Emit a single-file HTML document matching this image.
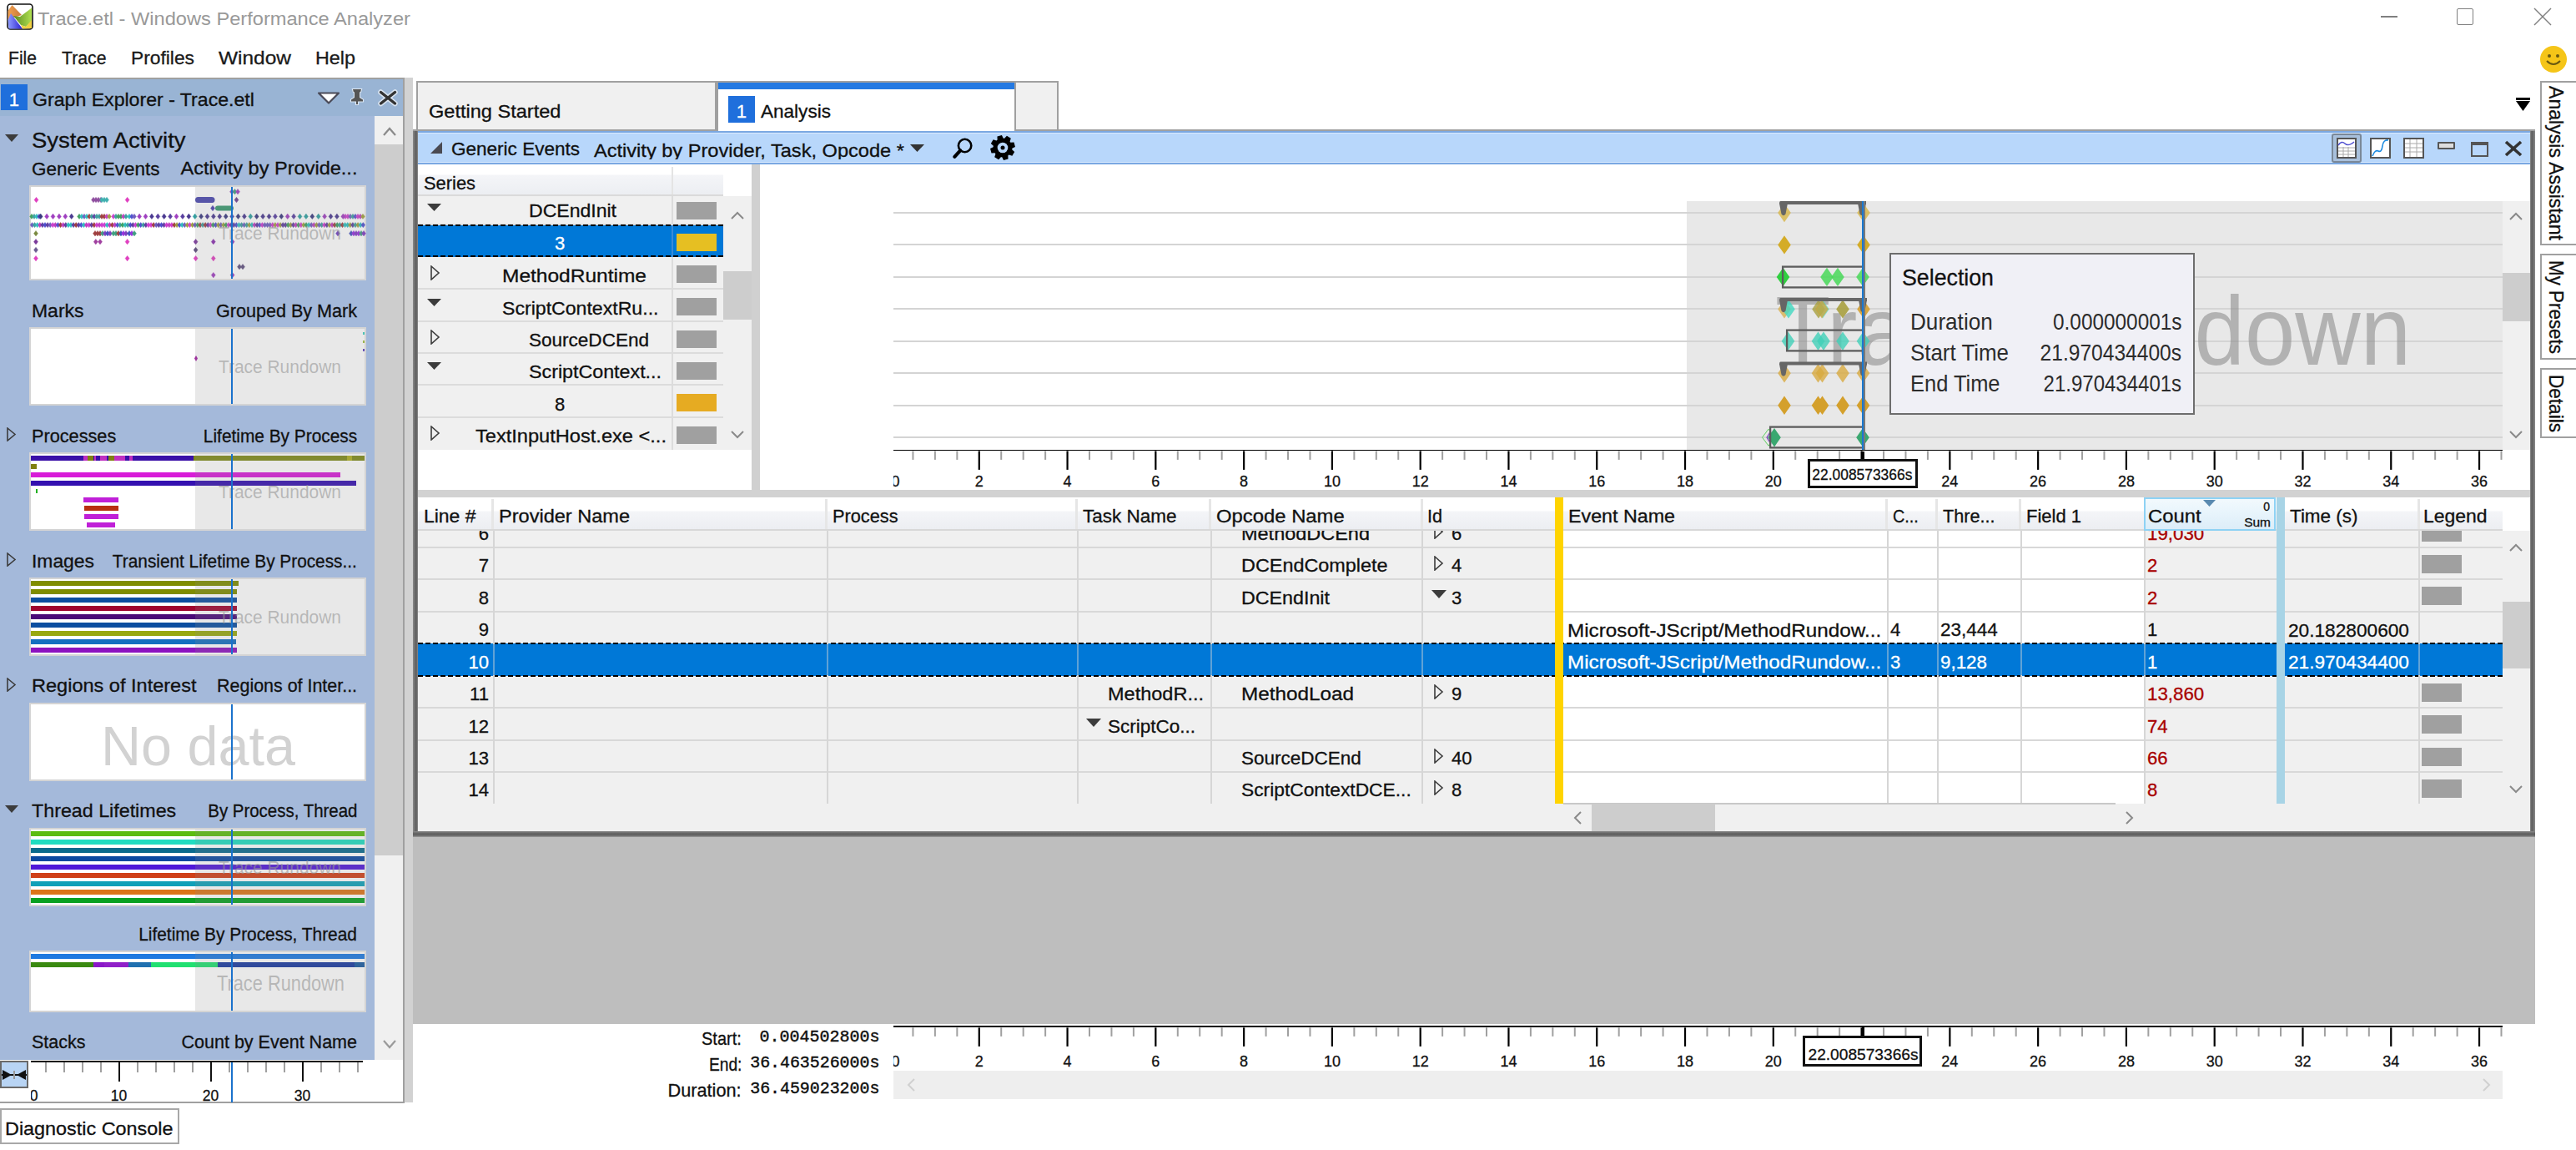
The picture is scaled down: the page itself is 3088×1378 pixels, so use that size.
<!DOCTYPE html><html><head><meta charset="utf-8"><title>WPA</title><style>html,body{margin:0;padding:0;}body{width:3088px;height:1378px;position:relative;overflow:hidden;background:#fff;font-family:"Liberation Sans",sans-serif;}</style></head><body>
<svg style="position:absolute;left:8px;top:4px" width="32" height="32" viewBox="0 0 32 32"><defs><linearGradient id="gb" x1="0" x2="1"><stop offset="0" stop-color="#8e9cff"/><stop offset="1" stop-color="#2a20d0"/></linearGradient><linearGradient id="gg" x1="0" x2="1"><stop offset="0" stop-color="#5a8a20"/><stop offset="1" stop-color="#b0e050"/></linearGradient><linearGradient id="go" x1="0" x2="1"><stop offset="0" stop-color="#f0a050"/><stop offset="1" stop-color="#c87838"/></linearGradient></defs><rect x="1" y="1" width="30" height="30" rx="3.5" fill="#fff" stroke="#111" stroke-width="1.6"/><polygon points="1.5,9 6.5,2 18,14 12,16 1.5,20" fill="url(#go)"/><polygon points="1.5,20 5,12 19,30.5 2.5,30.5" fill="url(#gb)"/><polygon points="8,15 16,16 30,5.5 30,22 23,28 17,26" fill="url(#gg)"/><polygon points="17,26 23,28 30,20 30,30 19,30.5" fill="#f0d040"/></svg>
<div style="position:absolute;left:45px;top:11.42px;font-family:'Liberation Sans', sans-serif;font-size:22.66px;line-height:22.66px;color:#999999;white-space:nowrap;transform:scaleX(1.0429);transform-origin:left center;">Trace.etl - Windows Performance Analyzer</div>
<div style="position:absolute;left:2854px;top:19px;width:20px;height:2px;background:#808080;"></div>
<div style="position:absolute;left:2945px;top:10px;width:20px;height:20px;background:transparent;border:1.5px solid #808080;border-radius:2px;box-sizing:border-box;"></div>
<svg style="position:absolute;left:3037px;top:9px" width="22" height="22"><line x1="1" y1="1" x2="21" y2="21" stroke="#808080" stroke-width="1.5"/><line x1="21" y1="1" x2="1" y2="21" stroke="#808080" stroke-width="1.5"/></svg>
<div style="position:absolute;left:10px;top:58.50px;font-family:'Liberation Sans', sans-serif;font-size:22.56px;line-height:22.56px;color:#1a1a1a;white-space:nowrap;transform:scaleX(0.9353);transform-origin:left center;-webkit-text-stroke:0.3px #1a1a1a;">File</div>
<div style="position:absolute;left:73.5px;top:58.50px;font-family:'Liberation Sans', sans-serif;font-size:22.56px;line-height:22.56px;color:#1a1a1a;white-space:nowrap;transform:scaleX(0.9414);transform-origin:left center;-webkit-text-stroke:0.3px #1a1a1a;">Trace</div>
<div style="position:absolute;left:157px;top:58.50px;font-family:'Liberation Sans', sans-serif;font-size:22.56px;line-height:22.56px;color:#1a1a1a;white-space:nowrap;transform:scaleX(1.0103);transform-origin:left center;-webkit-text-stroke:0.3px #1a1a1a;">Profiles</div>
<div style="position:absolute;left:262px;top:58.50px;font-family:'Liberation Sans', sans-serif;font-size:22.56px;line-height:22.56px;color:#1a1a1a;white-space:nowrap;transform:scaleX(1.0843);transform-origin:left center;-webkit-text-stroke:0.3px #1a1a1a;">Window</div>
<div style="position:absolute;left:378px;top:58.50px;font-family:'Liberation Sans', sans-serif;font-size:22.56px;line-height:22.56px;color:#1a1a1a;white-space:nowrap;transform:scaleX(1.0345);transform-origin:left center;-webkit-text-stroke:0.3px #1a1a1a;">Help</div>
<div style="position:absolute;left:0px;top:93px;width:485px;height:2px;background:#a0a0a0;"></div>
<div style="position:absolute;left:0px;top:95px;width:483px;height:44px;background:#99b4d4;"></div>
<div style="position:absolute;left:483px;top:93px;width:2px;height:1228px;background:#a0a0a0;"></div>
<div style="position:absolute;left:485px;top:93px;width:10px;height:1228px;background:#d2d2d2;"></div>
<div style="position:absolute;left:0px;top:139px;width:449px;height:1131px;background:#a4b9da;"></div>
<div style="position:absolute;left:449px;top:139px;width:34px;height:1131px;background:#f0f0f0;"></div>
<div style="position:absolute;left:449px;top:173px;width:34px;height:852px;background:#cdcdcd;"></div>
<svg style="position:absolute;left:458px;top:150px" width="18" height="14"><polyline points="2,12 9,4 16,12" fill="none" stroke="#8a8a8a" stroke-width="2.2"/></svg>
<svg style="position:absolute;left:458px;top:1245px" width="18" height="14"><polyline points="2,2 9,10 16,2" fill="none" stroke="#9a9a9a" stroke-width="2.2"/></svg>
<div style="position:absolute;left:1px;top:101px;width:32px;height:31px;background:#1f6fdc;"></div>
<div style="position:absolute;left:-483px;width:1000px;text-align:center;top:108.91px;font-family:'Liberation Sans', sans-serif;font-size:22.08px;line-height:22.08px;color:#fff;white-space:nowrap;-webkit-text-stroke:0.3px #fff;">1</div>
<div style="position:absolute;left:39px;top:109.32px;font-family:'Liberation Sans', sans-serif;font-size:22.18px;line-height:22.18px;color:#111;white-space:nowrap;transform:scaleX(1.0424);transform-origin:left center;-webkit-text-stroke:0.3px #111;">Graph Explorer - Trace.etl</div>
<svg style="position:absolute;left:380px;top:108px" width="28" height="18"><polygon points="2,3.5 26,3.5 14,15.5" fill="#fff" stroke="#4a4a58" stroke-width="2.2" stroke-linejoin="round"/></svg>
<svg style="position:absolute;left:416px;top:104px" width="26" height="26" viewBox="0 0 26 26"><path d="M7 3 H17 L16.2 6 L15 6.5 L15 13 L19 15.5 V17.5 H13 V21 H11 V17.5 H5 V15.5 L9 13 L9 6.5 L7.8 6 Z" fill="#555" stroke="#e6eef8" stroke-width="2.2" stroke-opacity="0.85" paint-order="stroke"/></svg>
<svg style="position:absolute;left:451px;top:106px" width="28" height="24"><g stroke="#e4ecf6" stroke-opacity="0.85" stroke-width="6.5" stroke-linecap="round"><line x1="5.5" y1="4.5" x2="22.5" y2="18"/><line x1="22.5" y1="4.5" x2="5.5" y2="18"/></g><g stroke="#333" stroke-width="3.4" stroke-linecap="round"><line x1="5.5" y1="4.5" x2="22.5" y2="18"/><line x1="22.5" y1="4.5" x2="5.5" y2="18"/></g></svg>
<svg style="position:absolute;left:6px;top:161px" width="16" height="9"><polygon points="0,0 16,0 8.0,9" fill="#3c3c3c"/></svg>
<div style="position:absolute;left:37.5px;top:154.50px;font-family:'Liberation Sans', sans-serif;font-size:26.11px;line-height:26.11px;color:#111;white-space:nowrap;transform:scaleX(1.0509);transform-origin:left center;-webkit-text-stroke:0.3px #111;">System Activity</div>
<div style="position:absolute;left:37.5px;top:191.82px;font-family:'Liberation Sans', sans-serif;font-size:21.6px;line-height:21.6px;color:#111;white-space:nowrap;transform:scaleX(1.0395);transform-origin:left center;-webkit-text-stroke:0.3px #111;">Generic Events</div>
<div style="position:absolute;left:-572px;width:1000px;text-align:right;top:191.25px;font-family:'Liberation Sans', sans-serif;font-size:22.27px;line-height:22.27px;color:#111;white-space:nowrap;-webkit-text-stroke:0.3px #111;"><span style="display:inline-block;transform:scaleX(1.0574);transform-origin:right center;">Activity by Provide...</span></div>
<div style="position:absolute;left:35px;top:222px;width:404px;height:114px;background:#d4d4d4;"></div>
<div style="position:absolute;left:37px;top:224px;width:400px;height:110px;background:#ffffff;"></div>
<svg style="position:absolute;left:0px;top:0px;overflow:visible" width="440" height="340"><polygon points="36.1,269.6 38.5,266.5 40.9,269.6 38.5,272.7" fill="#7060c0" stroke="#7060c0" stroke-opacity="0.5" stroke-width="0.8"/><polygon points="39.2,269.6 41.6,266.5 44.0,269.6 41.6,272.7" fill="#40a0a0" stroke="#40a0a0" stroke-opacity="0.5" stroke-width="0.8"/><polygon points="42.3,269.6 44.7,266.5 47.1,269.6 44.7,272.7" fill="#30c0c0" stroke="#30c0c0" stroke-opacity="0.5" stroke-width="0.8"/><polygon points="45.4,269.6 47.8,266.5 50.2,269.6 47.8,272.7" fill="#c040c0" stroke="#c040c0" stroke-opacity="0.5" stroke-width="0.8"/><polygon points="48.5,269.6 50.9,266.5 53.3,269.6 50.9,272.7" fill="#6040a0" stroke="#6040a0" stroke-opacity="0.5" stroke-width="0.8"/><polygon points="51.6,269.6 54.0,266.5 56.4,269.6 54.0,272.7" fill="#5050d0" stroke="#5050d0" stroke-opacity="0.5" stroke-width="0.8"/><polygon points="54.7,269.6 57.1,266.5 59.5,269.6 57.1,272.7" fill="#6040a0" stroke="#6040a0" stroke-opacity="0.5" stroke-width="0.8"/><polygon points="57.8,269.6 60.2,266.5 62.6,269.6 60.2,272.7" fill="#7060c0" stroke="#7060c0" stroke-opacity="0.5" stroke-width="0.8"/><polygon points="60.9,269.6 63.3,266.5 65.7,269.6 63.3,272.7" fill="#d040d0" stroke="#d040d0" stroke-opacity="0.5" stroke-width="0.8"/><polygon points="64.0,269.6 66.4,266.5 68.8,269.6 66.4,272.7" fill="#c040c0" stroke="#c040c0" stroke-opacity="0.5" stroke-width="0.8"/><polygon points="67.1,269.6 69.5,266.5 71.9,269.6 69.5,272.7" fill="#5050d0" stroke="#5050d0" stroke-opacity="0.5" stroke-width="0.8"/><polygon points="70.2,269.6 72.6,266.5 75.0,269.6 72.6,272.7" fill="#a04040" stroke="#a04040" stroke-opacity="0.5" stroke-width="0.8"/><polygon points="73.3,269.6 75.7,266.5 78.1,269.6 75.7,272.7" fill="#c040c0" stroke="#c040c0" stroke-opacity="0.5" stroke-width="0.8"/><polygon points="76.4,269.6 78.8,266.5 81.2,269.6 78.8,272.7" fill="#6040a0" stroke="#6040a0" stroke-opacity="0.5" stroke-width="0.8"/><polygon points="79.5,269.6 81.9,266.5 84.3,269.6 81.9,272.7" fill="#30c0c0" stroke="#30c0c0" stroke-opacity="0.5" stroke-width="0.8"/><polygon points="82.6,269.6 85.0,266.5 87.4,269.6 85.0,272.7" fill="#30c0c0" stroke="#30c0c0" stroke-opacity="0.5" stroke-width="0.8"/><polygon points="85.7,269.6 88.1,266.5 90.5,269.6 88.1,272.7" fill="#6040a0" stroke="#6040a0" stroke-opacity="0.5" stroke-width="0.8"/><polygon points="88.8,269.6 91.2,266.5 93.6,269.6 91.2,272.7" fill="#a04040" stroke="#a04040" stroke-opacity="0.5" stroke-width="0.8"/><polygon points="91.9,269.6 94.3,266.5 96.7,269.6 94.3,272.7" fill="#6040a0" stroke="#6040a0" stroke-opacity="0.5" stroke-width="0.8"/><polygon points="95.0,269.6 97.4,266.5 99.8,269.6 97.4,272.7" fill="#5050d0" stroke="#5050d0" stroke-opacity="0.5" stroke-width="0.8"/><polygon points="98.1,269.6 100.5,266.5 102.9,269.6 100.5,272.7" fill="#30c0c0" stroke="#30c0c0" stroke-opacity="0.5" stroke-width="0.8"/><polygon points="101.2,269.6 103.6,266.5 106.0,269.6 103.6,272.7" fill="#c040c0" stroke="#c040c0" stroke-opacity="0.5" stroke-width="0.8"/><polygon points="104.3,269.6 106.7,266.5 109.1,269.6 106.7,272.7" fill="#d040d0" stroke="#d040d0" stroke-opacity="0.5" stroke-width="0.8"/><polygon points="107.4,269.6 109.8,266.5 112.2,269.6 109.8,272.7" fill="#6040a0" stroke="#6040a0" stroke-opacity="0.5" stroke-width="0.8"/><polygon points="110.5,269.6 112.9,266.5 115.3,269.6 112.9,272.7" fill="#a04040" stroke="#a04040" stroke-opacity="0.5" stroke-width="0.8"/><polygon points="113.6,269.6 116.0,266.5 118.4,269.6 116.0,272.7" fill="#d040d0" stroke="#d040d0" stroke-opacity="0.5" stroke-width="0.8"/><polygon points="116.7,269.6 119.1,266.5 121.5,269.6 119.1,272.7" fill="#c040c0" stroke="#c040c0" stroke-opacity="0.5" stroke-width="0.8"/><polygon points="119.8,269.6 122.2,266.5 124.6,269.6 122.2,272.7" fill="#d040d0" stroke="#d040d0" stroke-opacity="0.5" stroke-width="0.8"/><polygon points="122.9,269.6 125.3,266.5 127.7,269.6 125.3,272.7" fill="#d040d0" stroke="#d040d0" stroke-opacity="0.5" stroke-width="0.8"/><polygon points="126.0,269.6 128.4,266.5 130.8,269.6 128.4,272.7" fill="#30c0c0" stroke="#30c0c0" stroke-opacity="0.5" stroke-width="0.8"/><polygon points="129.1,269.6 131.5,266.5 133.9,269.6 131.5,272.7" fill="#c040c0" stroke="#c040c0" stroke-opacity="0.5" stroke-width="0.8"/><polygon points="132.2,269.6 134.6,266.5 137.0,269.6 134.6,272.7" fill="#a04040" stroke="#a04040" stroke-opacity="0.5" stroke-width="0.8"/><polygon points="135.3,269.6 137.7,266.5 140.1,269.6 137.7,272.7" fill="#c040c0" stroke="#c040c0" stroke-opacity="0.5" stroke-width="0.8"/><polygon points="138.4,269.6 140.8,266.5 143.2,269.6 140.8,272.7" fill="#5050d0" stroke="#5050d0" stroke-opacity="0.5" stroke-width="0.8"/><polygon points="141.5,269.6 143.9,266.5 146.3,269.6 143.9,272.7" fill="#40a0a0" stroke="#40a0a0" stroke-opacity="0.5" stroke-width="0.8"/><polygon points="144.6,269.6 147.0,266.5 149.4,269.6 147.0,272.7" fill="#40a060" stroke="#40a060" stroke-opacity="0.5" stroke-width="0.8"/><polygon points="147.7,269.6 150.1,266.5 152.5,269.6 150.1,272.7" fill="#30c0c0" stroke="#30c0c0" stroke-opacity="0.5" stroke-width="0.8"/><polygon points="150.8,269.6 153.2,266.5 155.6,269.6 153.2,272.7" fill="#40a0a0" stroke="#40a0a0" stroke-opacity="0.5" stroke-width="0.8"/><polygon points="153.9,269.6 156.3,266.5 158.7,269.6 156.3,272.7" fill="#5050d0" stroke="#5050d0" stroke-opacity="0.5" stroke-width="0.8"/><polygon points="157.0,269.6 159.4,266.5 161.8,269.6 159.4,272.7" fill="#6040a0" stroke="#6040a0" stroke-opacity="0.5" stroke-width="0.8"/><polygon points="160.1,269.6 162.5,266.5 164.9,269.6 162.5,272.7" fill="#d040d0" stroke="#d040d0" stroke-opacity="0.5" stroke-width="0.8"/><polygon points="163.2,269.6 165.6,266.5 168.0,269.6 165.6,272.7" fill="#40a060" stroke="#40a060" stroke-opacity="0.5" stroke-width="0.8"/><polygon points="166.3,269.6 168.7,266.5 171.1,269.6 168.7,272.7" fill="#5050d0" stroke="#5050d0" stroke-opacity="0.5" stroke-width="0.8"/><polygon points="169.4,269.6 171.8,266.5 174.2,269.6 171.8,272.7" fill="#40a0a0" stroke="#40a0a0" stroke-opacity="0.5" stroke-width="0.8"/><polygon points="172.5,269.6 174.9,266.5 177.3,269.6 174.9,272.7" fill="#6040a0" stroke="#6040a0" stroke-opacity="0.5" stroke-width="0.8"/><polygon points="175.6,269.6 178.0,266.5 180.4,269.6 178.0,272.7" fill="#d040d0" stroke="#d040d0" stroke-opacity="0.5" stroke-width="0.8"/><polygon points="178.7,269.6 181.1,266.5 183.5,269.6 181.1,272.7" fill="#d040d0" stroke="#d040d0" stroke-opacity="0.5" stroke-width="0.8"/><polygon points="181.8,269.6 184.2,266.5 186.6,269.6 184.2,272.7" fill="#a04040" stroke="#a04040" stroke-opacity="0.5" stroke-width="0.8"/><polygon points="184.9,269.6 187.3,266.5 189.7,269.6 187.3,272.7" fill="#7060c0" stroke="#7060c0" stroke-opacity="0.5" stroke-width="0.8"/><polygon points="188.0,269.6 190.4,266.5 192.8,269.6 190.4,272.7" fill="#6040a0" stroke="#6040a0" stroke-opacity="0.5" stroke-width="0.8"/><polygon points="191.1,269.6 193.5,266.5 195.9,269.6 193.5,272.7" fill="#5050d0" stroke="#5050d0" stroke-opacity="0.5" stroke-width="0.8"/><polygon points="194.2,269.6 196.6,266.5 199.0,269.6 196.6,272.7" fill="#6040a0" stroke="#6040a0" stroke-opacity="0.5" stroke-width="0.8"/><polygon points="197.3,269.6 199.7,266.5 202.1,269.6 199.7,272.7" fill="#d040d0" stroke="#d040d0" stroke-opacity="0.5" stroke-width="0.8"/><polygon points="200.4,269.6 202.8,266.5 205.2,269.6 202.8,272.7" fill="#c040c0" stroke="#c040c0" stroke-opacity="0.5" stroke-width="0.8"/><polygon points="203.5,269.6 205.9,266.5 208.3,269.6 205.9,272.7" fill="#d040d0" stroke="#d040d0" stroke-opacity="0.5" stroke-width="0.8"/><polygon points="206.6,269.6 209.0,266.5 211.4,269.6 209.0,272.7" fill="#a04040" stroke="#a04040" stroke-opacity="0.5" stroke-width="0.8"/><polygon points="209.7,269.6 212.1,266.5 214.5,269.6 212.1,272.7" fill="#a0a040" stroke="#a0a040" stroke-opacity="0.5" stroke-width="0.8"/><polygon points="212.8,269.6 215.2,266.5 217.6,269.6 215.2,272.7" fill="#5050d0" stroke="#5050d0" stroke-opacity="0.5" stroke-width="0.8"/><polygon points="215.9,269.6 218.3,266.5 220.7,269.6 218.3,272.7" fill="#30c0c0" stroke="#30c0c0" stroke-opacity="0.5" stroke-width="0.8"/><polygon points="219.0,269.6 221.4,266.5 223.8,269.6 221.4,272.7" fill="#7060c0" stroke="#7060c0" stroke-opacity="0.5" stroke-width="0.8"/><polygon points="222.1,269.6 224.5,266.5 226.9,269.6 224.5,272.7" fill="#a0a040" stroke="#a0a040" stroke-opacity="0.5" stroke-width="0.8"/><polygon points="225.2,269.6 227.6,266.5 230.0,269.6 227.6,272.7" fill="#d040d0" stroke="#d040d0" stroke-opacity="0.5" stroke-width="0.8"/><polygon points="228.3,269.6 230.7,266.5 233.1,269.6 230.7,272.7" fill="#a0a040" stroke="#a0a040" stroke-opacity="0.5" stroke-width="0.8"/><polygon points="231.4,269.6 233.8,266.5 236.2,269.6 233.8,272.7" fill="#7060c0" stroke="#7060c0" stroke-opacity="0.5" stroke-width="0.8"/><polygon points="234.5,269.6 236.9,266.5 239.3,269.6 236.9,272.7" fill="#40a060" stroke="#40a060" stroke-opacity="0.5" stroke-width="0.8"/><polygon points="237.6,269.6 240.0,266.5 242.4,269.6 240.0,272.7" fill="#a04040" stroke="#a04040" stroke-opacity="0.5" stroke-width="0.8"/><polygon points="240.7,269.6 243.1,266.5 245.5,269.6 243.1,272.7" fill="#40a0a0" stroke="#40a0a0" stroke-opacity="0.5" stroke-width="0.8"/><polygon points="243.8,269.6 246.2,266.5 248.6,269.6 246.2,272.7" fill="#a04040" stroke="#a04040" stroke-opacity="0.5" stroke-width="0.8"/><polygon points="246.9,269.6 249.3,266.5 251.7,269.6 249.3,272.7" fill="#6040a0" stroke="#6040a0" stroke-opacity="0.5" stroke-width="0.8"/><polygon points="250.0,269.6 252.4,266.5 254.8,269.6 252.4,272.7" fill="#d040d0" stroke="#d040d0" stroke-opacity="0.5" stroke-width="0.8"/><polygon points="253.1,269.6 255.5,266.5 257.9,269.6 255.5,272.7" fill="#40a060" stroke="#40a060" stroke-opacity="0.5" stroke-width="0.8"/><polygon points="256.2,269.6 258.6,266.5 261.0,269.6 258.6,272.7" fill="#5050d0" stroke="#5050d0" stroke-opacity="0.5" stroke-width="0.8"/><polygon points="259.3,269.6 261.7,266.5 264.1,269.6 261.7,272.7" fill="#a0a040" stroke="#a0a040" stroke-opacity="0.5" stroke-width="0.8"/><polygon points="262.4,269.6 264.8,266.5 267.2,269.6 264.8,272.7" fill="#7060c0" stroke="#7060c0" stroke-opacity="0.5" stroke-width="0.8"/><polygon points="265.5,269.6 267.9,266.5 270.3,269.6 267.9,272.7" fill="#a0a040" stroke="#a0a040" stroke-opacity="0.5" stroke-width="0.8"/><polygon points="268.6,269.6 271.0,266.5 273.4,269.6 271.0,272.7" fill="#40a060" stroke="#40a060" stroke-opacity="0.5" stroke-width="0.8"/><polygon points="271.7,269.6 274.1,266.5 276.5,269.6 274.1,272.7" fill="#d040d0" stroke="#d040d0" stroke-opacity="0.5" stroke-width="0.8"/><polygon points="274.8,269.6 277.2,266.5 279.6,269.6 277.2,272.7" fill="#6040a0" stroke="#6040a0" stroke-opacity="0.5" stroke-width="0.8"/><polygon points="277.9,269.6 280.3,266.5 282.7,269.6 280.3,272.7" fill="#6040a0" stroke="#6040a0" stroke-opacity="0.5" stroke-width="0.8"/><polygon points="281.0,269.6 283.4,266.5 285.8,269.6 283.4,272.7" fill="#5050d0" stroke="#5050d0" stroke-opacity="0.5" stroke-width="0.8"/><polygon points="284.1,269.6 286.5,266.5 288.9,269.6 286.5,272.7" fill="#30c0c0" stroke="#30c0c0" stroke-opacity="0.5" stroke-width="0.8"/><polygon points="287.2,269.6 289.6,266.5 292.0,269.6 289.6,272.7" fill="#40a0a0" stroke="#40a0a0" stroke-opacity="0.5" stroke-width="0.8"/><polygon points="290.3,269.6 292.7,266.5 295.1,269.6 292.7,272.7" fill="#7060c0" stroke="#7060c0" stroke-opacity="0.5" stroke-width="0.8"/><polygon points="293.4,269.6 295.8,266.5 298.2,269.6 295.8,272.7" fill="#40a0a0" stroke="#40a0a0" stroke-opacity="0.5" stroke-width="0.8"/><polygon points="296.5,269.6 298.9,266.5 301.3,269.6 298.9,272.7" fill="#a0a040" stroke="#a0a040" stroke-opacity="0.5" stroke-width="0.8"/><polygon points="299.6,269.6 302.0,266.5 304.4,269.6 302.0,272.7" fill="#30c0c0" stroke="#30c0c0" stroke-opacity="0.5" stroke-width="0.8"/><polygon points="302.7,269.6 305.1,266.5 307.5,269.6 305.1,272.7" fill="#c040c0" stroke="#c040c0" stroke-opacity="0.5" stroke-width="0.8"/><polygon points="305.8,269.6 308.2,266.5 310.6,269.6 308.2,272.7" fill="#6040a0" stroke="#6040a0" stroke-opacity="0.5" stroke-width="0.8"/><polygon points="308.9,269.6 311.3,266.5 313.7,269.6 311.3,272.7" fill="#5050d0" stroke="#5050d0" stroke-opacity="0.5" stroke-width="0.8"/><polygon points="312.0,269.6 314.4,266.5 316.8,269.6 314.4,272.7" fill="#d040d0" stroke="#d040d0" stroke-opacity="0.5" stroke-width="0.8"/><polygon points="315.1,269.6 317.5,266.5 319.9,269.6 317.5,272.7" fill="#7060c0" stroke="#7060c0" stroke-opacity="0.5" stroke-width="0.8"/><polygon points="318.2,269.6 320.6,266.5 323.0,269.6 320.6,272.7" fill="#7060c0" stroke="#7060c0" stroke-opacity="0.5" stroke-width="0.8"/><polygon points="321.3,269.6 323.7,266.5 326.1,269.6 323.7,272.7" fill="#7060c0" stroke="#7060c0" stroke-opacity="0.5" stroke-width="0.8"/><polygon points="324.4,269.6 326.8,266.5 329.2,269.6 326.8,272.7" fill="#d040d0" stroke="#d040d0" stroke-opacity="0.5" stroke-width="0.8"/><polygon points="327.5,269.6 329.9,266.5 332.3,269.6 329.9,272.7" fill="#a0a040" stroke="#a0a040" stroke-opacity="0.5" stroke-width="0.8"/><polygon points="330.6,269.6 333.0,266.5 335.4,269.6 333.0,272.7" fill="#d040d0" stroke="#d040d0" stroke-opacity="0.5" stroke-width="0.8"/><polygon points="333.7,269.6 336.1,266.5 338.5,269.6 336.1,272.7" fill="#a0a040" stroke="#a0a040" stroke-opacity="0.5" stroke-width="0.8"/><polygon points="336.8,269.6 339.2,266.5 341.6,269.6 339.2,272.7" fill="#6040a0" stroke="#6040a0" stroke-opacity="0.5" stroke-width="0.8"/><polygon points="339.9,269.6 342.3,266.5 344.7,269.6 342.3,272.7" fill="#6040a0" stroke="#6040a0" stroke-opacity="0.5" stroke-width="0.8"/><polygon points="343.0,269.6 345.4,266.5 347.8,269.6 345.4,272.7" fill="#40a060" stroke="#40a060" stroke-opacity="0.5" stroke-width="0.8"/><polygon points="346.1,269.6 348.5,266.5 350.9,269.6 348.5,272.7" fill="#a0a040" stroke="#a0a040" stroke-opacity="0.5" stroke-width="0.8"/><polygon points="349.2,269.6 351.6,266.5 354.0,269.6 351.6,272.7" fill="#6040a0" stroke="#6040a0" stroke-opacity="0.5" stroke-width="0.8"/><polygon points="352.3,269.6 354.7,266.5 357.1,269.6 354.7,272.7" fill="#c040c0" stroke="#c040c0" stroke-opacity="0.5" stroke-width="0.8"/><polygon points="355.4,269.6 357.8,266.5 360.2,269.6 357.8,272.7" fill="#40a060" stroke="#40a060" stroke-opacity="0.5" stroke-width="0.8"/><polygon points="358.5,269.6 360.9,266.5 363.3,269.6 360.9,272.7" fill="#d040d0" stroke="#d040d0" stroke-opacity="0.5" stroke-width="0.8"/><polygon points="361.6,269.6 364.0,266.5 366.4,269.6 364.0,272.7" fill="#a0a040" stroke="#a0a040" stroke-opacity="0.5" stroke-width="0.8"/><polygon points="364.7,269.6 367.1,266.5 369.5,269.6 367.1,272.7" fill="#40a060" stroke="#40a060" stroke-opacity="0.5" stroke-width="0.8"/><polygon points="367.8,269.6 370.2,266.5 372.6,269.6 370.2,272.7" fill="#30c0c0" stroke="#30c0c0" stroke-opacity="0.5" stroke-width="0.8"/><polygon points="370.9,269.6 373.3,266.5 375.7,269.6 373.3,272.7" fill="#7060c0" stroke="#7060c0" stroke-opacity="0.5" stroke-width="0.8"/><polygon points="374.0,269.6 376.4,266.5 378.8,269.6 376.4,272.7" fill="#c040c0" stroke="#c040c0" stroke-opacity="0.5" stroke-width="0.8"/><polygon points="377.1,269.6 379.5,266.5 381.9,269.6 379.5,272.7" fill="#a0a040" stroke="#a0a040" stroke-opacity="0.5" stroke-width="0.8"/><polygon points="380.2,269.6 382.6,266.5 385.0,269.6 382.6,272.7" fill="#7060c0" stroke="#7060c0" stroke-opacity="0.5" stroke-width="0.8"/><polygon points="383.3,269.6 385.7,266.5 388.1,269.6 385.7,272.7" fill="#40a0a0" stroke="#40a0a0" stroke-opacity="0.5" stroke-width="0.8"/><polygon points="386.4,269.6 388.8,266.5 391.2,269.6 388.8,272.7" fill="#d040d0" stroke="#d040d0" stroke-opacity="0.5" stroke-width="0.8"/><polygon points="389.5,269.6 391.9,266.5 394.3,269.6 391.9,272.7" fill="#6040a0" stroke="#6040a0" stroke-opacity="0.5" stroke-width="0.8"/><polygon points="392.6,269.6 395.0,266.5 397.4,269.6 395.0,272.7" fill="#a0a040" stroke="#a0a040" stroke-opacity="0.5" stroke-width="0.8"/><polygon points="395.7,269.6 398.1,266.5 400.5,269.6 398.1,272.7" fill="#c040c0" stroke="#c040c0" stroke-opacity="0.5" stroke-width="0.8"/><polygon points="398.8,269.6 401.2,266.5 403.6,269.6 401.2,272.7" fill="#a04040" stroke="#a04040" stroke-opacity="0.5" stroke-width="0.8"/><polygon points="401.9,269.6 404.3,266.5 406.7,269.6 404.3,272.7" fill="#40a060" stroke="#40a060" stroke-opacity="0.5" stroke-width="0.8"/><polygon points="405.0,269.6 407.4,266.5 409.8,269.6 407.4,272.7" fill="#40a0a0" stroke="#40a0a0" stroke-opacity="0.5" stroke-width="0.8"/><polygon points="408.1,269.6 410.5,266.5 412.9,269.6 410.5,272.7" fill="#a04040" stroke="#a04040" stroke-opacity="0.5" stroke-width="0.8"/><polygon points="411.2,269.6 413.6,266.5 416.0,269.6 413.6,272.7" fill="#30c0c0" stroke="#30c0c0" stroke-opacity="0.5" stroke-width="0.8"/><polygon points="414.3,269.6 416.7,266.5 419.1,269.6 416.7,272.7" fill="#30c0c0" stroke="#30c0c0" stroke-opacity="0.5" stroke-width="0.8"/><polygon points="417.4,269.6 419.8,266.5 422.2,269.6 419.8,272.7" fill="#a0a040" stroke="#a0a040" stroke-opacity="0.5" stroke-width="0.8"/><polygon points="420.5,269.6 422.9,266.5 425.3,269.6 422.9,272.7" fill="#6040a0" stroke="#6040a0" stroke-opacity="0.5" stroke-width="0.8"/><polygon points="423.6,269.6 426.0,266.5 428.4,269.6 426.0,272.7" fill="#40a0a0" stroke="#40a0a0" stroke-opacity="0.5" stroke-width="0.8"/><polygon points="426.7,269.6 429.1,266.5 431.5,269.6 429.1,272.7" fill="#a0a040" stroke="#a0a040" stroke-opacity="0.5" stroke-width="0.8"/><polygon points="429.8,269.6 432.2,266.5 434.6,269.6 432.2,272.7" fill="#30c0c0" stroke="#30c0c0" stroke-opacity="0.5" stroke-width="0.8"/><polygon points="432.9,269.6 435.3,266.5 437.7,269.6 435.3,272.7" fill="#5050d0" stroke="#5050d0" stroke-opacity="0.5" stroke-width="0.8"/><polygon points="35.6,259.4 38.0,256.3 40.4,259.4 38.0,262.5" fill="#40a060" stroke="#40a060" stroke-opacity="0.5" stroke-width="0.8"/><polygon points="38.6,259.4 41.0,256.3 43.4,259.4 41.0,262.5" fill="#40a0a0" stroke="#40a0a0" stroke-opacity="0.5" stroke-width="0.8"/><polygon points="41.6,259.4 44.0,256.3 46.4,259.4 44.0,262.5" fill="#30c0c0" stroke="#30c0c0" stroke-opacity="0.5" stroke-width="0.8"/><polygon points="44.6,259.4 47.0,256.3 49.4,259.4 47.0,262.5" fill="#5050d0" stroke="#5050d0" stroke-opacity="0.5" stroke-width="0.8"/><polygon points="92.6,259.4 95.0,256.3 97.4,259.4 95.0,262.5" fill="#40a060" stroke="#40a060" stroke-opacity="0.5" stroke-width="0.8"/><polygon points="95.6,259.4 98.0,256.3 100.4,259.4 98.0,262.5" fill="#30c0c0" stroke="#30c0c0" stroke-opacity="0.5" stroke-width="0.8"/><polygon points="98.6,259.4 101.0,256.3 103.4,259.4 101.0,262.5" fill="#7060c0" stroke="#7060c0" stroke-opacity="0.5" stroke-width="0.8"/><polygon points="101.6,259.4 104.0,256.3 106.4,259.4 104.0,262.5" fill="#30c0c0" stroke="#30c0c0" stroke-opacity="0.5" stroke-width="0.8"/><polygon points="104.6,259.4 107.0,256.3 109.4,259.4 107.0,262.5" fill="#a04040" stroke="#a04040" stroke-opacity="0.5" stroke-width="0.8"/><polygon points="107.6,259.4 110.0,256.3 112.4,259.4 110.0,262.5" fill="#40a0a0" stroke="#40a0a0" stroke-opacity="0.5" stroke-width="0.8"/><polygon points="110.6,259.4 113.0,256.3 115.4,259.4 113.0,262.5" fill="#6040a0" stroke="#6040a0" stroke-opacity="0.5" stroke-width="0.8"/><polygon points="113.6,259.4 116.0,256.3 118.4,259.4 116.0,262.5" fill="#40a0a0" stroke="#40a0a0" stroke-opacity="0.5" stroke-width="0.8"/><polygon points="116.6,259.4 119.0,256.3 121.4,259.4 119.0,262.5" fill="#40a0a0" stroke="#40a0a0" stroke-opacity="0.5" stroke-width="0.8"/><polygon points="119.6,259.4 122.0,256.3 124.4,259.4 122.0,262.5" fill="#a04040" stroke="#a04040" stroke-opacity="0.5" stroke-width="0.8"/><polygon points="122.6,259.4 125.0,256.3 127.4,259.4 125.0,262.5" fill="#a04040" stroke="#a04040" stroke-opacity="0.5" stroke-width="0.8"/><polygon points="125.6,259.4 128.0,256.3 130.4,259.4 128.0,262.5" fill="#c040c0" stroke="#c040c0" stroke-opacity="0.5" stroke-width="0.8"/><polygon points="128.6,259.4 131.0,256.3 133.4,259.4 131.0,262.5" fill="#a0a040" stroke="#a0a040" stroke-opacity="0.5" stroke-width="0.8"/><polygon points="133.6,259.4 136.0,256.3 138.4,259.4 136.0,262.5" fill="#d040d0" stroke="#d040d0" stroke-opacity="0.5" stroke-width="0.8"/><polygon points="136.6,259.4 139.0,256.3 141.4,259.4 139.0,262.5" fill="#40a0a0" stroke="#40a0a0" stroke-opacity="0.5" stroke-width="0.8"/><polygon points="139.6,259.4 142.0,256.3 144.4,259.4 142.0,262.5" fill="#40a060" stroke="#40a060" stroke-opacity="0.5" stroke-width="0.8"/><polygon points="142.6,259.4 145.0,256.3 147.4,259.4 145.0,262.5" fill="#40a060" stroke="#40a060" stroke-opacity="0.5" stroke-width="0.8"/><polygon points="145.6,259.4 148.0,256.3 150.4,259.4 148.0,262.5" fill="#c040c0" stroke="#c040c0" stroke-opacity="0.5" stroke-width="0.8"/><polygon points="148.6,259.4 151.0,256.3 153.4,259.4 151.0,262.5" fill="#40a0a0" stroke="#40a0a0" stroke-opacity="0.5" stroke-width="0.8"/><polygon points="152.6,259.4 155.0,256.3 157.4,259.4 155.0,262.5" fill="#30c0c0" stroke="#30c0c0" stroke-opacity="0.5" stroke-width="0.8"/><polygon points="155.6,259.4 158.0,256.3 160.4,259.4 158.0,262.5" fill="#5050d0" stroke="#5050d0" stroke-opacity="0.5" stroke-width="0.8"/><polygon points="158.6,259.4 161.0,256.3 163.4,259.4 161.0,262.5" fill="#7060c0" stroke="#7060c0" stroke-opacity="0.5" stroke-width="0.8"/><polygon points="411.6,259.4 414.0,256.3 416.4,259.4 414.0,262.5" fill="#d040d0" stroke="#d040d0" stroke-opacity="0.5" stroke-width="0.8"/><polygon points="414.6,259.4 417.0,256.3 419.4,259.4 417.0,262.5" fill="#d040d0" stroke="#d040d0" stroke-opacity="0.5" stroke-width="0.8"/><polygon points="417.6,259.4 420.0,256.3 422.4,259.4 420.0,262.5" fill="#7060c0" stroke="#7060c0" stroke-opacity="0.5" stroke-width="0.8"/><polygon points="420.6,259.4 423.0,256.3 425.4,259.4 423.0,262.5" fill="#40a0a0" stroke="#40a0a0" stroke-opacity="0.5" stroke-width="0.8"/><polygon points="423.6,259.4 426.0,256.3 428.4,259.4 426.0,262.5" fill="#5050d0" stroke="#5050d0" stroke-opacity="0.5" stroke-width="0.8"/><polygon points="426.6,259.4 429.0,256.3 431.4,259.4 429.0,262.5" fill="#d040d0" stroke="#d040d0" stroke-opacity="0.5" stroke-width="0.8"/><polygon points="429.6,259.4 432.0,256.3 434.4,259.4 432.0,262.5" fill="#c040c0" stroke="#c040c0" stroke-opacity="0.5" stroke-width="0.8"/><polygon points="432.6,259.4 435.0,256.3 437.4,259.4 435.0,262.5" fill="#a0a040" stroke="#a0a040" stroke-opacity="0.5" stroke-width="0.8"/><polygon points="46.2,259.4 48.7,256.1 51.2,259.4 48.7,262.6" fill="#3a3a80" stroke="#3a3a80" stroke-opacity="0.5" stroke-width="0.8"/><polygon points="53.6,259.4 56.1,256.1 58.6,259.4 56.1,262.6" fill="#a040c0" stroke="#a040c0" stroke-opacity="0.5" stroke-width="0.8"/><polygon points="61.0,259.4 63.5,256.1 66.0,259.4 63.5,262.6" fill="#a040c0" stroke="#a040c0" stroke-opacity="0.5" stroke-width="0.8"/><polygon points="68.4,259.4 70.9,256.1 73.4,259.4 70.9,262.6" fill="#a040c0" stroke="#a040c0" stroke-opacity="0.5" stroke-width="0.8"/><polygon points="75.8,259.4 78.3,256.1 80.8,259.4 78.3,262.6" fill="#a040c0" stroke="#a040c0" stroke-opacity="0.5" stroke-width="0.8"/><polygon points="83.2,259.4 85.7,256.1 88.2,259.4 85.7,262.6" fill="#4a3a90" stroke="#4a3a90" stroke-opacity="0.5" stroke-width="0.8"/><polygon points="164.6,259.4 167.1,256.1 169.6,259.4 167.1,262.6" fill="#a040c0" stroke="#a040c0" stroke-opacity="0.5" stroke-width="0.8"/><polygon points="172.0,259.4 174.5,256.1 177.0,259.4 174.5,262.6" fill="#a040c0" stroke="#a040c0" stroke-opacity="0.5" stroke-width="0.8"/><polygon points="179.4,259.4 181.9,256.1 184.4,259.4 181.9,262.6" fill="#4a3a90" stroke="#4a3a90" stroke-opacity="0.5" stroke-width="0.8"/><polygon points="186.8,259.4 189.3,256.1 191.8,259.4 189.3,262.6" fill="#5a40a0" stroke="#5a40a0" stroke-opacity="0.5" stroke-width="0.8"/><polygon points="194.2,259.4 196.7,256.1 199.2,259.4 196.7,262.6" fill="#4a3a90" stroke="#4a3a90" stroke-opacity="0.5" stroke-width="0.8"/><polygon points="201.6,259.4 204.1,256.1 206.6,259.4 204.1,262.6" fill="#5a40a0" stroke="#5a40a0" stroke-opacity="0.5" stroke-width="0.8"/><polygon points="209.0,259.4 211.5,256.1 214.0,259.4 211.5,262.6" fill="#a040c0" stroke="#a040c0" stroke-opacity="0.5" stroke-width="0.8"/><polygon points="216.4,259.4 218.9,256.1 221.4,259.4 218.9,262.6" fill="#5a40a0" stroke="#5a40a0" stroke-opacity="0.5" stroke-width="0.8"/><polygon points="223.8,259.4 226.3,256.1 228.8,259.4 226.3,262.6" fill="#4a3a90" stroke="#4a3a90" stroke-opacity="0.5" stroke-width="0.8"/><polygon points="231.2,259.4 233.7,256.1 236.2,259.4 233.7,262.6" fill="#30a0a0" stroke="#30a0a0" stroke-opacity="0.5" stroke-width="0.8"/><polygon points="238.6,259.4 241.1,256.1 243.6,259.4 241.1,262.6" fill="#3a3a80" stroke="#3a3a80" stroke-opacity="0.5" stroke-width="0.8"/><polygon points="246.0,259.4 248.5,256.1 251.0,259.4 248.5,262.6" fill="#4a3a90" stroke="#4a3a90" stroke-opacity="0.5" stroke-width="0.8"/><polygon points="253.4,259.4 255.9,256.1 258.4,259.4 255.9,262.6" fill="#4a3a90" stroke="#4a3a90" stroke-opacity="0.5" stroke-width="0.8"/><polygon points="260.8,259.4 263.3,256.1 265.8,259.4 263.3,262.6" fill="#4a3a90" stroke="#4a3a90" stroke-opacity="0.5" stroke-width="0.8"/><polygon points="268.2,259.4 270.7,256.1 273.2,259.4 270.7,262.6" fill="#3a3a80" stroke="#3a3a80" stroke-opacity="0.5" stroke-width="0.8"/><polygon points="275.6,259.4 278.1,256.1 280.6,259.4 278.1,262.6" fill="#5a40a0" stroke="#5a40a0" stroke-opacity="0.5" stroke-width="0.8"/><polygon points="283.0,259.4 285.5,256.1 288.0,259.4 285.5,262.6" fill="#3a3a80" stroke="#3a3a80" stroke-opacity="0.5" stroke-width="0.8"/><polygon points="290.4,259.4 292.9,256.1 295.4,259.4 292.9,262.6" fill="#4a3a90" stroke="#4a3a90" stroke-opacity="0.5" stroke-width="0.8"/><polygon points="297.8,259.4 300.3,256.1 302.8,259.4 300.3,262.6" fill="#30a0a0" stroke="#30a0a0" stroke-opacity="0.5" stroke-width="0.8"/><polygon points="305.2,259.4 307.7,256.1 310.2,259.4 307.7,262.6" fill="#3a3a80" stroke="#3a3a80" stroke-opacity="0.5" stroke-width="0.8"/><polygon points="312.6,259.4 315.1,256.1 317.6,259.4 315.1,262.6" fill="#4a3a90" stroke="#4a3a90" stroke-opacity="0.5" stroke-width="0.8"/><polygon points="320.0,259.4 322.5,256.1 325.0,259.4 322.5,262.6" fill="#4a3a90" stroke="#4a3a90" stroke-opacity="0.5" stroke-width="0.8"/><polygon points="327.4,259.4 329.9,256.1 332.4,259.4 329.9,262.6" fill="#5a40a0" stroke="#5a40a0" stroke-opacity="0.5" stroke-width="0.8"/><polygon points="334.8,259.4 337.3,256.1 339.8,259.4 337.3,262.6" fill="#3a3a80" stroke="#3a3a80" stroke-opacity="0.5" stroke-width="0.8"/><polygon points="342.2,259.4 344.7,256.1 347.2,259.4 344.7,262.6" fill="#a040c0" stroke="#a040c0" stroke-opacity="0.5" stroke-width="0.8"/><polygon points="349.6,259.4 352.1,256.1 354.6,259.4 352.1,262.6" fill="#5a40a0" stroke="#5a40a0" stroke-opacity="0.5" stroke-width="0.8"/><polygon points="357.0,259.4 359.5,256.1 362.0,259.4 359.5,262.6" fill="#30a0a0" stroke="#30a0a0" stroke-opacity="0.5" stroke-width="0.8"/><polygon points="364.4,259.4 366.9,256.1 369.4,259.4 366.9,262.6" fill="#30a0a0" stroke="#30a0a0" stroke-opacity="0.5" stroke-width="0.8"/><polygon points="371.8,259.4 374.3,256.1 376.8,259.4 374.3,262.6" fill="#3a3a80" stroke="#3a3a80" stroke-opacity="0.5" stroke-width="0.8"/><polygon points="379.2,259.4 381.7,256.1 384.2,259.4 381.7,262.6" fill="#30a0a0" stroke="#30a0a0" stroke-opacity="0.5" stroke-width="0.8"/><polygon points="386.6,259.4 389.1,256.1 391.6,259.4 389.1,262.6" fill="#a040c0" stroke="#a040c0" stroke-opacity="0.5" stroke-width="0.8"/><polygon points="394.0,259.4 396.5,256.1 399.0,259.4 396.5,262.6" fill="#4a3a90" stroke="#4a3a90" stroke-opacity="0.5" stroke-width="0.8"/><polygon points="401.4,259.4 403.9,256.1 406.4,259.4 403.9,262.6" fill="#4a3a90" stroke="#4a3a90" stroke-opacity="0.5" stroke-width="0.8"/><polygon points="408.8,259.4 411.3,256.1 413.8,259.4 411.3,262.6" fill="#a040c0" stroke="#a040c0" stroke-opacity="0.5" stroke-width="0.8"/><polygon points="40.5,279.7 43.0,276.4 45.5,279.7 43.0,282.9" fill="#7a8a40" stroke="#7a8a40" stroke-opacity="0.5" stroke-width="0.8"/><polygon points="111.5,279.7 114.0,276.4 116.5,279.7 114.0,282.9" fill="#a04040" stroke="#a04040" stroke-opacity="0.5" stroke-width="0.8"/><polygon points="114.5,279.7 117.0,276.4 119.5,279.7 117.0,282.9" fill="#a04040" stroke="#a04040" stroke-opacity="0.5" stroke-width="0.8"/><polygon points="117.5,279.7 120.0,276.4 122.5,279.7 120.0,282.9" fill="#a04040" stroke="#a04040" stroke-opacity="0.5" stroke-width="0.8"/><polygon points="120.5,279.7 123.0,276.4 125.5,279.7 123.0,282.9" fill="#40a080" stroke="#40a080" stroke-opacity="0.5" stroke-width="0.8"/><polygon points="123.5,279.7 126.0,276.4 128.5,279.7 126.0,282.9" fill="#8040c0" stroke="#8040c0" stroke-opacity="0.5" stroke-width="0.8"/><polygon points="126.5,279.7 129.0,276.4 131.5,279.7 129.0,282.9" fill="#4050c0" stroke="#4050c0" stroke-opacity="0.5" stroke-width="0.8"/><polygon points="129.5,279.7 132.0,276.4 134.5,279.7 132.0,282.9" fill="#8040c0" stroke="#8040c0" stroke-opacity="0.5" stroke-width="0.8"/><polygon points="133.5,279.7 136.0,276.4 138.5,279.7 136.0,282.9" fill="#40a080" stroke="#40a080" stroke-opacity="0.5" stroke-width="0.8"/><polygon points="136.5,279.7 139.0,276.4 141.5,279.7 139.0,282.9" fill="#40a080" stroke="#40a080" stroke-opacity="0.5" stroke-width="0.8"/><polygon points="139.5,279.7 142.0,276.4 144.5,279.7 142.0,282.9" fill="#a04040" stroke="#a04040" stroke-opacity="0.5" stroke-width="0.8"/><polygon points="142.5,279.7 145.0,276.4 147.5,279.7 145.0,282.9" fill="#4050c0" stroke="#4050c0" stroke-opacity="0.5" stroke-width="0.8"/><polygon points="145.5,279.7 148.0,276.4 150.5,279.7 148.0,282.9" fill="#9a30e0" stroke="#9a30e0" stroke-opacity="0.5" stroke-width="0.8"/><polygon points="148.5,279.7 151.0,276.4 153.5,279.7 151.0,282.9" fill="#8040c0" stroke="#8040c0" stroke-opacity="0.5" stroke-width="0.8"/><polygon points="152.5,279.7 155.0,276.4 157.5,279.7 155.0,282.9" fill="#4050c0" stroke="#4050c0" stroke-opacity="0.5" stroke-width="0.8"/><polygon points="155.5,279.7 158.0,276.4 160.5,279.7 158.0,282.9" fill="#9a30e0" stroke="#9a30e0" stroke-opacity="0.5" stroke-width="0.8"/><polygon points="158.5,279.7 161.0,276.4 163.5,279.7 161.0,282.9" fill="#40a080" stroke="#40a080" stroke-opacity="0.5" stroke-width="0.8"/><polygon points="418.5,279.7 421.0,276.4 423.5,279.7 421.0,282.9" fill="#4050c0" stroke="#4050c0" stroke-opacity="0.5" stroke-width="0.8"/><polygon points="421.5,279.7 424.0,276.4 426.5,279.7 424.0,282.9" fill="#9a30e0" stroke="#9a30e0" stroke-opacity="0.5" stroke-width="0.8"/><polygon points="424.5,279.7 427.0,276.4 429.5,279.7 427.0,282.9" fill="#8040c0" stroke="#8040c0" stroke-opacity="0.5" stroke-width="0.8"/><polygon points="427.5,279.7 430.0,276.4 432.5,279.7 430.0,282.9" fill="#9a30e0" stroke="#9a30e0" stroke-opacity="0.5" stroke-width="0.8"/><polygon points="430.5,279.7 433.0,276.4 435.5,279.7 433.0,282.9" fill="#40a080" stroke="#40a080" stroke-opacity="0.5" stroke-width="0.8"/><polygon points="433.5,279.7 436.0,276.4 438.5,279.7 436.0,282.9" fill="#8040c0" stroke="#8040c0" stroke-opacity="0.5" stroke-width="0.8"/><polygon points="402.5,279.7 405.0,276.4 407.5,279.7 405.0,282.9" fill="#7040c0" stroke="#7040c0" stroke-opacity="0.5" stroke-width="0.8"/><polygon points="40.5,289.7 43.0,286.4 45.5,289.7 43.0,292.9" fill="#7a3a9a" stroke="#7a3a9a" stroke-opacity="0.5" stroke-width="0.8"/><polygon points="112.3,289.7 114.8,286.4 117.3,289.7 114.8,292.9" fill="#a040a0" stroke="#a040a0" stroke-opacity="0.5" stroke-width="0.8"/><polygon points="117.5,289.7 120.0,286.4 122.5,289.7 120.0,292.9" fill="#a040a0" stroke="#a040a0" stroke-opacity="0.5" stroke-width="0.8"/><polygon points="150.1,289.7 152.6,286.4 155.1,289.7 152.6,292.9" fill="#e040c0" stroke="#e040c0" stroke-opacity="0.5" stroke-width="0.8"/><polygon points="232.1,289.7 234.6,286.4 237.1,289.7 234.6,292.9" fill="#7a3a9a" stroke="#7a3a9a" stroke-opacity="0.5" stroke-width="0.8"/><polygon points="253.3,289.7 255.8,286.4 258.3,289.7 255.8,292.9" fill="#8a30b0" stroke="#8a30b0" stroke-opacity="0.5" stroke-width="0.8"/><polygon points="276.1,289.7 278.6,286.4 281.1,289.7 278.6,292.9" fill="#9040c0" stroke="#9040c0" stroke-opacity="0.5" stroke-width="0.8"/><polygon points="40.5,299.5 43.0,296.2 45.5,299.5 43.0,302.8" fill="#6a5a90" stroke="#6a5a90" stroke-opacity="0.5" stroke-width="0.8"/><polygon points="232.1,299.5 234.6,296.2 237.1,299.5 234.6,302.8" fill="#5a4a7a" stroke="#5a4a7a" stroke-opacity="0.5" stroke-width="0.8"/><polygon points="40.5,309.6 43.0,306.4 45.5,309.6 43.0,312.9" fill="#e040c0" stroke="#e040c0" stroke-opacity="0.5" stroke-width="0.8"/><polygon points="150.1,309.6 152.6,306.4 155.1,309.6 152.6,312.9" fill="#e040c0" stroke="#e040c0" stroke-opacity="0.5" stroke-width="0.8"/><polygon points="232.1,309.6 234.6,306.4 237.1,309.6 234.6,312.9" fill="#e040c0" stroke="#e040c0" stroke-opacity="0.5" stroke-width="0.8"/><polygon points="253.3,309.6 255.8,306.4 258.3,309.6 255.8,312.9" fill="#e040c0" stroke="#e040c0" stroke-opacity="0.5" stroke-width="0.8"/><polygon points="284.5,319.7 287.0,316.4 289.5,319.7 287.0,322.9" fill="#605080" stroke="#605080" stroke-opacity="0.5" stroke-width="0.8"/><polygon points="288.5,319.7 291.0,316.4 293.5,319.7 291.0,322.9" fill="#605080" stroke="#605080" stroke-opacity="0.5" stroke-width="0.8"/><polygon points="253.3,329.6 255.8,326.4 258.3,329.6 255.8,332.9" fill="#a040c0" stroke="#a040c0" stroke-opacity="0.5" stroke-width="0.8"/><polygon points="276.1,329.6 278.6,326.4 281.1,329.6 278.6,332.9" fill="#a040c0" stroke="#a040c0" stroke-opacity="0.5" stroke-width="0.8"/><polygon points="41.0,239.6 43.5,236.3 46.0,239.6 43.5,242.8" fill="#e040c0" stroke="#e040c0" stroke-opacity="0.5" stroke-width="0.8"/><polygon points="150.1,239.6 152.6,236.3 155.1,239.6 152.6,242.8" fill="#e040c0" stroke="#e040c0" stroke-opacity="0.5" stroke-width="0.8"/><polygon points="109.5,239.6 112.0,236.3 114.5,239.6 112.0,242.8" fill="#9050a0" stroke="#9050a0" stroke-opacity="0.5" stroke-width="0.8"/><polygon points="112.5,239.6 115.0,236.3 117.5,239.6 115.0,242.8" fill="#9050a0" stroke="#9050a0" stroke-opacity="0.5" stroke-width="0.8"/><polygon points="115.5,239.6 118.0,236.3 120.5,239.6 118.0,242.8" fill="#9050a0" stroke="#9050a0" stroke-opacity="0.5" stroke-width="0.8"/><polygon points="118.5,239.6 121.0,236.3 123.5,239.6 121.0,242.8" fill="#9050a0" stroke="#9050a0" stroke-opacity="0.5" stroke-width="0.8"/><polygon points="119.5,239.6 122.0,236.3 124.5,239.6 122.0,242.8" fill="#40b0b0" stroke="#40b0b0" stroke-opacity="0.5" stroke-width="0.8"/><polygon points="122.5,239.6 125.0,236.3 127.5,239.6 125.0,242.8" fill="#40b0b0" stroke="#40b0b0" stroke-opacity="0.5" stroke-width="0.8"/><polygon points="125.5,239.6 128.0,236.3 130.5,239.6 128.0,242.8" fill="#40b0b0" stroke="#40b0b0" stroke-opacity="0.5" stroke-width="0.8"/><rect x="234" y="236.1" width="23.5" height="7" rx="3.5" fill="#4a48b0"/><polygon points="281.0,239.6 283.5,236.3 286.0,239.6 283.5,242.8" fill="#704090" stroke="#704090" stroke-opacity="0.5" stroke-width="0.8"/><polygon points="252.5,249.5 255.0,246.2 257.5,249.5 255.0,252.8" fill="#4a40b0" stroke="#4a40b0" stroke-opacity="0.5" stroke-width="0.8"/><rect x="258" y="246.5" width="22" height="6" rx="3" fill="#3a9a70"/><polygon points="275.5,229.7 278.0,226.4 280.5,229.7 278.0,232.9" fill="#a040c0" stroke="#a040c0" stroke-opacity="0.5" stroke-width="0.8"/><polygon points="279.0,229.7 281.5,226.4 284.0,229.7 281.5,232.9" fill="#40a080" stroke="#40a080" stroke-opacity="0.5" stroke-width="0.8"/><polygon points="282.5,229.7 285.0,226.4 287.5,229.7 285.0,232.9" fill="#a040c0" stroke="#a040c0" stroke-opacity="0.5" stroke-width="0.8"/></svg>
<div style="position:absolute;left:234px;top:224px;width:203px;height:110px;background:rgba(140,140,140,0.2);"></div>
<div style="position:absolute;left:261.5px;top:269.00px;font-family:'Liberation Sans', sans-serif;font-size:22.56px;line-height:22.56px;color:rgba(150,150,150,0.6);white-space:nowrap;transform:scaleX(0.9279);transform-origin:left center;">Trace Rundown</div>
<div style="position:absolute;left:277px;top:224px;width:2px;height:110px;background:#1a72cc;"></div>
<div style="position:absolute;left:37.5px;top:361.91px;font-family:'Liberation Sans', sans-serif;font-size:22.08px;line-height:22.08px;color:#111;white-space:nowrap;transform:scaleX(1.0398);transform-origin:left center;-webkit-text-stroke:0.3px #111;">Marks</div>
<div style="position:absolute;left:-571.5px;width:1000px;text-align:right;top:361.91px;font-family:'Liberation Sans', sans-serif;font-size:22.08px;line-height:22.08px;color:#111;white-space:nowrap;-webkit-text-stroke:0.3px #111;"><span style="display:inline-block;transform:scaleX(0.9767);transform-origin:right center;">Grouped By Mark</span></div>
<div style="position:absolute;left:35px;top:392px;width:404px;height:94px;background:#d4d4d4;"></div>
<div style="position:absolute;left:37px;top:394px;width:400px;height:90px;background:#ffffff;"></div>
<svg style="position:absolute;left:230px;top:424px" width="10" height="12"><polygon points="5,2 7,5.5 5,9 3,5.5" fill="#a020a0"/></svg>
<div style="position:absolute;left:435px;top:398px;width:2px;height:3px;background:#40d0c0;"></div>
<div style="position:absolute;left:435px;top:408px;width:2px;height:3px;background:#a0c040;"></div>
<div style="position:absolute;left:435px;top:418px;width:2px;height:3px;background:#6040c0;"></div>
<div style="position:absolute;left:234px;top:394px;width:203px;height:90px;background:rgba(140,140,140,0.2);"></div>
<div style="position:absolute;left:261.5px;top:429.00px;font-family:'Liberation Sans', sans-serif;font-size:22.56px;line-height:22.56px;color:rgba(150,150,150,0.6);white-space:nowrap;transform:scaleX(0.9279);transform-origin:left center;">Trace Rundown</div>
<div style="position:absolute;left:277px;top:394px;width:2px;height:90px;background:#1a72cc;"></div>
<svg style="position:absolute;left:8px;top:512px" width="12" height="17"><polygon points="1,1 10,8.5 1,16" fill="none" stroke="#3c3c3c" stroke-width="1.6"/></svg>
<div style="position:absolute;left:37.5px;top:511.91px;font-family:'Liberation Sans', sans-serif;font-size:22.08px;line-height:22.08px;color:#111;white-space:nowrap;transform:scaleX(0.9822);transform-origin:left center;-webkit-text-stroke:0.3px #111;">Processes</div>
<div style="position:absolute;left:-572px;width:1000px;text-align:right;top:511.91px;font-family:'Liberation Sans', sans-serif;font-size:22.08px;line-height:22.08px;color:#111;white-space:nowrap;-webkit-text-stroke:0.3px #111;"><span style="display:inline-block;transform:scaleX(0.9443);transform-origin:right center;">Lifetime By Process</span></div>
<div style="position:absolute;left:35px;top:542px;width:404px;height:94px;background:#d4d4d4;"></div>
<div style="position:absolute;left:37px;top:544px;width:400px;height:90px;background:#ffffff;"></div>
<div style="position:absolute;left:37px;top:546px;width:195px;height:6px;background:#3a10a8;"></div>
<div style="position:absolute;left:100px;top:546px;width:5px;height:6px;background:#c030c0;"></div>
<div style="position:absolute;left:105px;top:546px;width:7px;height:6px;background:#808010;"></div>
<div style="position:absolute;left:113px;top:546px;width:2px;height:6px;background:#c030c0;"></div>
<div style="position:absolute;left:120px;top:546px;width:8px;height:6px;background:#c030c0;"></div>
<div style="position:absolute;left:130px;top:546px;width:7px;height:6px;background:#808010;"></div>
<div style="position:absolute;left:137px;top:546px;width:13px;height:6px;background:#c030c0;"></div>
<div style="position:absolute;left:150px;top:546px;width:5px;height:6px;background:#3a10a8;"></div>
<div style="position:absolute;left:155px;top:546px;width:4px;height:6px;background:#c030c0;"></div>
<div style="position:absolute;left:232px;top:546px;width:205px;height:6px;background:#7f8a18;"></div>
<div style="position:absolute;left:416px;top:546px;width:6px;height:6px;background:#b0b020;"></div>
<div style="position:absolute;left:37px;top:556px;width:7px;height:6px;background:#808010;"></div>
<div style="position:absolute;left:37px;top:566px;width:371px;height:6px;background:#d81cd8;"></div>
<div style="position:absolute;left:37px;top:576px;width:390px;height:6px;background:#3410b0;"></div>
<div style="position:absolute;left:43px;top:586px;width:2px;height:5px;background:#20b020;"></div>
<div style="position:absolute;left:100px;top:596px;width:42px;height:6px;background:#c020d8;"></div>
<div style="position:absolute;left:101px;top:606px;width:41px;height:6px;background:#b83010;"></div>
<div style="position:absolute;left:101px;top:616px;width:41px;height:6px;background:#c020d8;"></div>
<div style="position:absolute;left:104px;top:626px;width:34px;height:6px;background:#c020d8;"></div>
<div style="position:absolute;left:234px;top:544px;width:203px;height:90px;background:rgba(140,140,140,0.2);"></div>
<div style="position:absolute;left:261.5px;top:579.00px;font-family:'Liberation Sans', sans-serif;font-size:22.56px;line-height:22.56px;color:rgba(150,150,150,0.6);white-space:nowrap;transform:scaleX(0.9279);transform-origin:left center;">Trace Rundown</div>
<div style="position:absolute;left:277px;top:544px;width:2px;height:90px;background:#1a72cc;"></div>
<svg style="position:absolute;left:8px;top:662px" width="12" height="17"><polygon points="1,1 10,8.5 1,16" fill="none" stroke="#3c3c3c" stroke-width="1.6"/></svg>
<div style="position:absolute;left:37.5px;top:661.91px;font-family:'Liberation Sans', sans-serif;font-size:22.08px;line-height:22.08px;color:#111;white-space:nowrap;transform:scaleX(1.0358);transform-origin:left center;-webkit-text-stroke:0.3px #111;">Images</div>
<div style="position:absolute;left:-572px;width:1000px;text-align:right;top:661.91px;font-family:'Liberation Sans', sans-serif;font-size:22.08px;line-height:22.08px;color:#111;white-space:nowrap;-webkit-text-stroke:0.3px #111;"><span style="display:inline-block;transform:scaleX(0.9425);transform-origin:right center;">Transient Lifetime By Process...</span></div>
<div style="position:absolute;left:35px;top:692px;width:404px;height:94px;background:#d4d4d4;"></div>
<div style="position:absolute;left:37px;top:694px;width:400px;height:90px;background:#ffffff;"></div>
<div style="position:absolute;left:37px;top:696px;width:249px;height:6px;background:#7f8c00;"></div>
<div style="position:absolute;left:37px;top:706px;width:247px;height:6px;background:#7f8c00;"></div>
<div style="position:absolute;left:37px;top:716px;width:247px;height:6px;background:#0c4ea0;"></div>
<div style="position:absolute;left:37px;top:726px;width:247px;height:6px;background:#a0052f;"></div>
<div style="position:absolute;left:37px;top:736px;width:247px;height:6px;background:#4a0a78;"></div>
<div style="position:absolute;left:37px;top:746px;width:247px;height:6px;background:#0c4ea0;"></div>
<div style="position:absolute;left:37px;top:756px;width:247px;height:6px;background:#98a810;"></div>
<div style="position:absolute;left:37px;top:766px;width:246px;height:6px;background:#1470c0;"></div>
<div style="position:absolute;left:37px;top:776px;width:247px;height:6px;background:#8c12c0;"></div>
<div style="position:absolute;left:234px;top:694px;width:203px;height:90px;background:rgba(140,140,140,0.2);"></div>
<div style="position:absolute;left:261.5px;top:729.00px;font-family:'Liberation Sans', sans-serif;font-size:22.56px;line-height:22.56px;color:rgba(150,150,150,0.6);white-space:nowrap;transform:scaleX(0.9279);transform-origin:left center;">Trace Rundown</div>
<div style="position:absolute;left:277px;top:694px;width:2px;height:90px;background:#1a72cc;"></div>
<svg style="position:absolute;left:8px;top:812px" width="12" height="17"><polygon points="1,1 10,8.5 1,16" fill="none" stroke="#3c3c3c" stroke-width="1.6"/></svg>
<div style="position:absolute;left:37.5px;top:811.41px;font-family:'Liberation Sans', sans-serif;font-size:22.08px;line-height:22.08px;color:#111;white-space:nowrap;transform:scaleX(1.0657);transform-origin:left center;-webkit-text-stroke:0.3px #111;">Regions of Interest</div>
<div style="position:absolute;left:-572px;width:1000px;text-align:right;top:811.41px;font-family:'Liberation Sans', sans-serif;font-size:22.08px;line-height:22.08px;color:#111;white-space:nowrap;-webkit-text-stroke:0.3px #111;"><span style="display:inline-block;transform:scaleX(0.9707);transform-origin:right center;">Regions of Inter...</span></div>
<div style="position:absolute;left:35px;top:842px;width:404px;height:94px;background:#d4d4d4;"></div>
<div style="position:absolute;left:37px;top:844px;width:400px;height:90px;background:#ffffff;"></div>
<div style="position:absolute;left:121px;top:860.71px;font-family:'Liberation Sans', sans-serif;font-size:66.5px;line-height:66.5px;color:#d2d2d2;white-space:nowrap;transform:scaleX(1.0004);transform-origin:left center;">No data</div>
<div style="position:absolute;left:277px;top:844px;width:2px;height:90px;background:#1a72cc;"></div>
<svg style="position:absolute;left:6px;top:965px" width="16" height="9"><polygon points="0,0 16,0 8.0,9" fill="#3c3c3c"/></svg>
<div style="position:absolute;left:37.5px;top:960.91px;font-family:'Liberation Sans', sans-serif;font-size:22.08px;line-height:22.08px;color:#111;white-space:nowrap;transform:scaleX(1.0535);transform-origin:left center;-webkit-text-stroke:0.3px #111;">Thread Lifetimes</div>
<div style="position:absolute;left:-572px;width:1000px;text-align:right;top:960.91px;font-family:'Liberation Sans', sans-serif;font-size:22.08px;line-height:22.08px;color:#111;white-space:nowrap;-webkit-text-stroke:0.3px #111;"><span style="display:inline-block;transform:scaleX(0.9264);transform-origin:right center;">By Process, Thread</span></div>
<div style="position:absolute;left:35px;top:992px;width:404px;height:94px;background:#d4d4d4;"></div>
<div style="position:absolute;left:37px;top:994px;width:400px;height:90px;background:#ffffff;"></div>
<div style="position:absolute;left:37px;top:996px;width:400px;height:6px;background:#5cbc10;"></div>
<div style="position:absolute;left:37px;top:1006px;width:400px;height:6px;background:#20dcc0;"></div>
<div style="position:absolute;left:37px;top:1016px;width:400px;height:6px;background:#0a6a8c;"></div>
<div style="position:absolute;left:37px;top:1026px;width:400px;height:6px;background:#0a48a0;"></div>
<div style="position:absolute;left:37px;top:1036px;width:400px;height:6px;background:#5018d8;"></div>
<div style="position:absolute;left:37px;top:1046px;width:400px;height:6px;background:#d04018;"></div>
<div style="position:absolute;left:37px;top:1056px;width:400px;height:6px;background:#10a0b8;"></div>
<div style="position:absolute;left:37px;top:1066px;width:400px;height:6px;background:#dc7418;"></div>
<div style="position:absolute;left:37px;top:1076px;width:400px;height:6px;background:#08a020;"></div>
<div style="position:absolute;left:234px;top:994px;width:203px;height:90px;background:rgba(140,140,140,0.2);"></div>
<div style="position:absolute;left:261.5px;top:1029.00px;font-family:'Liberation Sans', sans-serif;font-size:22.56px;line-height:22.56px;color:rgba(150,150,150,0.6);white-space:nowrap;transform:scaleX(0.9279);transform-origin:left center;">Trace Rundown</div>
<div style="position:absolute;left:277px;top:994px;width:2px;height:90px;background:#1a72cc;"></div>
<div style="position:absolute;left:-572px;width:1000px;text-align:right;top:1109.41px;font-family:'Liberation Sans', sans-serif;font-size:22.08px;line-height:22.08px;color:#111;white-space:nowrap;-webkit-text-stroke:0.3px #111;"><span style="display:inline-block;transform:scaleX(0.9451);transform-origin:right center;">Lifetime By Process, Thread</span></div>
<div style="position:absolute;left:35px;top:1139px;width:404px;height:74px;background:#d4d4d4;"></div>
<div style="position:absolute;left:37px;top:1141px;width:400px;height:70px;background:#ffffff;"></div>
<div style="position:absolute;left:37px;top:1143px;width:400px;height:6px;background:#1f7ae0;"></div>
<div style="position:absolute;left:37px;top:1153px;width:75px;height:6px;background:#3a8a10;"></div>
<div style="position:absolute;left:112px;top:1153px;width:13px;height:6px;background:#8a18c8;"></div>
<div style="position:absolute;left:125px;top:1153px;width:29px;height:6px;background:#9020c8;"></div>
<div style="position:absolute;left:154px;top:1153px;width:27px;height:6px;background:#1f70b0;"></div>
<div style="position:absolute;left:181px;top:1153px;width:80px;height:6px;background:#20e070;"></div>
<div style="position:absolute;left:261px;top:1153px;width:164px;height:6px;background:#1a3aa0;"></div>
<div style="position:absolute;left:425px;top:1153px;width:12px;height:6px;background:#1a5aa0;"></div>
<div style="position:absolute;left:234px;top:1141px;width:203px;height:70px;background:rgba(140,140,140,0.2);"></div>
<div style="position:absolute;left:259.5px;top:1165.97px;font-family:'Liberation Sans', sans-serif;font-size:24.96px;line-height:24.96px;color:rgba(150,150,150,0.6);white-space:nowrap;transform:scaleX(0.8729);transform-origin:left center;">Trace Rundown</div>
<div style="position:absolute;left:277px;top:1141px;width:2px;height:70px;background:#1a72cc;"></div>
<div style="position:absolute;left:37.5px;top:1237.91px;font-family:'Liberation Sans', sans-serif;font-size:22.08px;line-height:22.08px;color:#111;white-space:nowrap;transform:scaleX(0.9734);transform-origin:left center;-webkit-text-stroke:0.3px #111;">Stacks</div>
<div style="position:absolute;left:-572px;width:1000px;text-align:right;top:1237.91px;font-family:'Liberation Sans', sans-serif;font-size:22.08px;line-height:22.08px;color:#111;white-space:nowrap;-webkit-text-stroke:0.3px #111;"><span style="display:inline-block;transform:scaleX(0.9745);transform-origin:right center;">Count by Event Name</span></div>
<div style="position:absolute;left:0px;top:1270px;width:483px;height:50px;background:#ffffff;"></div>
<div style="position:absolute;left:0px;top:1320px;width:485px;height:2px;background:#a0a0a0;"></div>
<div style="position:absolute;left:0px;top:1271px;width:34px;height:33px;background:#b8d4f4;border:2px solid #6a6a6a;box-sizing:border-box;"></div>
<svg style="position:absolute;left:2px;top:1280px" width="30" height="16"><polygon points="1,2 12,8 1,14" fill="#111"/><polygon points="29,2 18,8 29,14" fill="#111"/><rect x="0" y="7" width="30" height="2" fill="#111"/><rect x="14" y="3" width="2" height="10" fill="#999"/></svg>
<div style="position:absolute;left:37px;top:1271px;width:398px;height:2px;background:#111;"></div>
<div style="position:absolute;left:54.0px;top:1273px;width:2px;height:11.5px;background:#a0a0a0;"></div>
<div style="position:absolute;left:76.0px;top:1273px;width:2px;height:11.5px;background:#a0a0a0;"></div>
<div style="position:absolute;left:98.0px;top:1273px;width:2px;height:11.5px;background:#a0a0a0;"></div>
<div style="position:absolute;left:120.0px;top:1273px;width:2px;height:11.5px;background:#a0a0a0;"></div>
<div style="position:absolute;left:141.5px;top:1273px;width:2px;height:23px;background:#111;"></div>
<div style="position:absolute;left:164.0px;top:1273px;width:2px;height:11.5px;background:#a0a0a0;"></div>
<div style="position:absolute;left:186.0px;top:1273px;width:2px;height:11.5px;background:#a0a0a0;"></div>
<div style="position:absolute;left:208.0px;top:1273px;width:2px;height:11.5px;background:#a0a0a0;"></div>
<div style="position:absolute;left:230.0px;top:1273px;width:2px;height:11.5px;background:#a0a0a0;"></div>
<div style="position:absolute;left:251.5px;top:1273px;width:2px;height:23px;background:#111;"></div>
<div style="position:absolute;left:274.0px;top:1273px;width:2px;height:11.5px;background:#a0a0a0;"></div>
<div style="position:absolute;left:296.0px;top:1273px;width:2px;height:11.5px;background:#a0a0a0;"></div>
<div style="position:absolute;left:318.0px;top:1273px;width:2px;height:11.5px;background:#a0a0a0;"></div>
<div style="position:absolute;left:340.0px;top:1273px;width:2px;height:11.5px;background:#a0a0a0;"></div>
<div style="position:absolute;left:361.5px;top:1273px;width:2px;height:23px;background:#111;"></div>
<div style="position:absolute;left:384.0px;top:1273px;width:2px;height:11.5px;background:#a0a0a0;"></div>
<div style="position:absolute;left:406.0px;top:1273px;width:2px;height:11.5px;background:#a0a0a0;"></div>
<div style="position:absolute;left:428.0px;top:1273px;width:2px;height:11.5px;background:#a0a0a0;"></div>
<div style="position:absolute;left:-357.5px;width:1000px;text-align:center;top:1305.19px;font-family:'Liberation Sans', sans-serif;font-size:17.5px;line-height:17.5px;color:#111;white-space:nowrap;-webkit-text-stroke:0.3px #111;">10</div>
<div style="position:absolute;left:-247.5px;width:1000px;text-align:center;top:1305.19px;font-family:'Liberation Sans', sans-serif;font-size:17.5px;line-height:17.5px;color:#111;white-space:nowrap;-webkit-text-stroke:0.3px #111;">20</div>
<div style="position:absolute;left:-137.5px;width:1000px;text-align:center;top:1305.19px;font-family:'Liberation Sans', sans-serif;font-size:17.5px;line-height:17.5px;color:#111;white-space:nowrap;-webkit-text-stroke:0.3px #111;">30</div>
<div style="position:absolute;left:37px;top:1295px;width:12px;height:30px;overflow:hidden"><div style="position:absolute;left:-496.5px;width:1000px;text-align:center;top:10.19px;font-family:'Liberation Sans', sans-serif;font-size:17.5px;line-height:17.5px;color:#111;white-space:nowrap;-webkit-text-stroke:0.3px #111;">0</div>
</div><div style="position:absolute;left:277px;top:1273px;width:2px;height:48px;background:#1a72cc;"></div>
<div style="position:absolute;left:0px;top:1328px;width:215px;height:43px;background:#ffffff;border:2px solid #a8a8a8;box-sizing:border-box;"></div>
<div style="position:absolute;left:6px;top:1341.75px;font-family:'Liberation Sans', sans-serif;font-size:22.27px;line-height:22.27px;color:#111;white-space:nowrap;transform:scaleX(1.0502);transform-origin:left center;-webkit-text-stroke:0.3px #111;">Diagnostic Console</div>
<div style="position:absolute;left:499px;top:97px;width:360px;height:60px;background:#f0f0f0;border:2px solid #a0a0a0;border-bottom:none;box-sizing:border-box;"></div>
<div style="position:absolute;left:514px;top:122.66px;font-family:'Liberation Sans', sans-serif;font-size:22.37px;line-height:22.37px;color:#111;white-space:nowrap;transform:scaleX(1.0534);transform-origin:left center;-webkit-text-stroke:0.3px #111;">Getting Started</div>
<div style="position:absolute;left:858px;top:97px;width:360px;height:60px;background:#ffffff;border:2px solid #a0a0a0;border-bottom:none;border-left:3px solid #a0a0a0;box-sizing:border-box;"></div>
<div style="position:absolute;left:861px;top:99px;width:355px;height:7.5px;background:#2479e2;"></div>
<div style="position:absolute;left:873px;top:115px;width:32px;height:32px;background:#1f6fdc;"></div>
<div style="position:absolute;left:389px;width:1000px;text-align:center;top:122.91px;font-family:'Liberation Sans', sans-serif;font-size:22.08px;line-height:22.08px;color:#fff;white-space:nowrap;-webkit-text-stroke:0.3px #fff;">1</div>
<div style="position:absolute;left:912px;top:123.23px;font-family:'Liberation Sans', sans-serif;font-size:21.7px;line-height:21.7px;color:#111;white-space:nowrap;transform:scaleX(1.0395);transform-origin:left center;-webkit-text-stroke:0.3px #111;">Analysis</div>
<div style="position:absolute;left:1216px;top:97px;width:53px;height:60px;background:#f0f0f0;border:2px solid #a0a0a0;border-bottom:none;box-sizing:border-box;"></div>
<svg style="position:absolute;left:3045px;top:55px" width="32" height="32"><circle cx="16" cy="16" r="16" fill="#f5c518"/><circle cx="11" cy="12" r="2" fill="#6a5a10"/><circle cx="21" cy="12" r="2" fill="#6a5a10"/><path d="M8 18 Q16 26 24 18" fill="none" stroke="#6a5a10" stroke-width="2"/></svg>
<div style="position:absolute;left:3016px;top:117px;width:17px;height:3px;background:#000;"></div>
<svg style="position:absolute;left:3016px;top:121px" width="17" height="12"><polygon points="0,0 17,0 8.5,12" fill="#000"/></svg>
<div style="position:absolute;left:3045px;top:97px;width:50px;height:197px;background:#ffffff;border:2px solid #a0a0a0;box-sizing:border-box;"></div>
<div style="position:absolute;left:3045px;top:97px;width:197px;height:44px;transform-origin:0 0;transform:translate(44px,0) rotate(90deg);"><div style="position:absolute;left:5.8px;top:13.69px;font-family:'Liberation Sans', sans-serif;font-size:23.52px;line-height:23.52px;color:#111;white-space:nowrap;transform:scaleX(0.9828);transform-origin:left center;-webkit-text-stroke:0.3px #111;">Analysis Assistant</div>
</div>
<div style="position:absolute;left:3045px;top:304px;width:50px;height:127px;background:#ffffff;border:2px solid #a0a0a0;box-sizing:border-box;"></div>
<div style="position:absolute;left:3045px;top:304px;width:127px;height:44px;transform-origin:0 0;transform:translate(44px,0) rotate(90deg);"><div style="position:absolute;left:7.5px;top:13.69px;font-family:'Liberation Sans', sans-serif;font-size:23.52px;line-height:23.52px;color:#111;white-space:nowrap;transform:scaleX(0.9522);transform-origin:left center;-webkit-text-stroke:0.3px #111;">My Presets</div>
</div>
<div style="position:absolute;left:3045px;top:441px;width:50px;height:84px;background:#ffffff;border:2px solid #a0a0a0;box-sizing:border-box;"></div>
<div style="position:absolute;left:3045px;top:441px;width:84px;height:44px;transform-origin:0 0;transform:translate(44px,0) rotate(90deg);"><div style="position:absolute;left:7.7px;top:13.69px;font-family:'Liberation Sans', sans-serif;font-size:23.52px;line-height:23.52px;color:#111;white-space:nowrap;transform:scaleX(0.9597);transform-origin:left center;-webkit-text-stroke:0.3px #111;">Details</div>
</div>
<div style="position:absolute;left:495px;top:155px;width:363px;height:2px;background:#a0a0a0;"></div>
<div style="position:absolute;left:1216px;top:155px;width:1823px;height:2px;background:#a0a0a0;"></div>
<div style="position:absolute;left:495px;top:157px;width:6px;height:846px;background:linear-gradient(90deg,#8a8a8a 0%,#606060 55%,#6a6a6a 80%,#909090 100%);"></div>
<div style="position:absolute;left:3033px;top:157px;width:6px;height:846px;background:linear-gradient(90deg,#909090 0%,#6a6a6a 20%,#606060 45%,#8a8a8a 100%);"></div>
<div style="position:absolute;left:495px;top:996px;width:2544px;height:7px;background:linear-gradient(180deg,#8a8a8a 0%,#5e5e5e 45%,#6c6c6c 75%,#9c9c9c 100%);"></div>
<div style="position:absolute;left:495px;top:1003px;width:2544px;height:224px;background:#bebebe;"></div>
<div style="position:absolute;left:501px;top:157px;width:2532px;height:40px;background:#b8d7fb;border-top:2px solid #7aa8e2;border-bottom:2px solid #7aa8e2;box-sizing:border-box;"></div>
<div style="position:absolute;left:501px;top:159px;width:2532px;height:1px;background:#d8e9fd;"></div>
<div style="position:absolute;left:501px;top:194px;width:2532px;height:1px;background:#d8e9fd;"></div>
<svg style="position:absolute;left:515px;top:169px" width="16" height="16"><polygon points="15,1 15,15 1,15" fill="#4a4a52"/></svg>
<div style="position:absolute;left:541px;top:167.91px;font-family:'Liberation Sans', sans-serif;font-size:22.08px;line-height:22.08px;color:#111;white-space:nowrap;transform:scaleX(1.0202);transform-origin:left center;-webkit-text-stroke:0.3px #111;">Generic Events</div>
<div style="position:absolute;left:700px;top:160px;width:390px;height:31px;overflow:hidden"><div style="position:absolute;left:12px;top:10.09px;font-family:'Liberation Sans', sans-serif;font-size:22.46px;line-height:22.46px;color:#111;white-space:nowrap;transform:scaleX(1.0505);transform-origin:left center;-webkit-text-stroke:0.3px #111;">Activity by Provider, Task, Opcode *</div>
</div>
<svg style="position:absolute;left:1091px;top:173px" width="18" height="10"><polygon points="0,0 17,0 8.5,9" fill="#333"/></svg>
<svg style="position:absolute;left:1136px;top:160px" width="34" height="34"><circle cx="20.6" cy="14.5" r="7.7" fill="none" stroke="#000" stroke-width="2.6"/><line x1="15.2" y1="20.3" x2="8.3" y2="27.8" stroke="#000" stroke-width="4.2" stroke-linecap="round"/></svg>
<svg style="position:absolute;left:1186px;top:160.8px" width="32" height="32"><polygon points="29.49,9.45 30.96,14.92 27.37,16.78 27.19,18.19 30.17,20.91 27.34,25.82 23.49,24.59 22.36,25.46 22.55,29.49 17.08,30.96 15.22,27.37 13.81,27.19 11.09,30.17 6.18,27.34 7.41,23.49 6.54,22.36 2.51,22.55 1.04,17.08 4.63,15.22 4.81,13.81 1.83,11.09 4.66,6.18 8.51,7.41 9.64,6.54 9.45,2.51 14.92,1.04 16.78,4.63 18.19,4.81 20.91,1.83 25.82,4.66 24.59,8.51 25.46,9.64" fill="#000"/><circle cx="16" cy="16" r="6.3" fill="#b8d7fb"/><circle cx="16" cy="16" r="2.5" fill="#000"/></svg>
<div style="position:absolute;left:2795px;top:160px;width:36px;height:35px;background:#a8c0dc;border:2px solid #7a8898;border-radius:3px;box-sizing:border-box;"></div>
<svg style="position:absolute;left:2801px;top:165px" width="24" height="25"><rect x="1" y="1" width="22" height="23" fill="#fff" stroke="#555" stroke-width="2"/><path d="M2 9 Q6 3 10 7 T21 5" fill="none" stroke="#5050d0" stroke-width="1.5"/><g stroke="#aaa" stroke-width="1"><line x1="2" y1="12" x2="22" y2="12"/><line x1="2" y1="16" x2="22" y2="16"/><line x1="2" y1="20" x2="22" y2="20"/><line x1="8" y1="11" x2="8" y2="23"/><line x1="14" y1="11" x2="14" y2="23"/></g></svg>
<svg style="position:absolute;left:2841px;top:165px" width="25" height="25"><rect x="1" y="1" width="23" height="23" fill="#fff" stroke="#555" stroke-width="2"/><path d="M3 22 Q6 14 10 16 T15 10 T22 3" fill="none" stroke="#1a8ae0" stroke-width="1.6"/></svg>
<svg style="position:absolute;left:2881px;top:165px" width="25" height="25"><rect x="1" y="1" width="23" height="23" fill="#fff" stroke="#555" stroke-width="2"/><g stroke="#aaa" stroke-width="1"><line x1="2" y1="7" x2="23" y2="7"/><line x1="2" y1="12" x2="23" y2="12"/><line x1="2" y1="17" x2="23" y2="17"/><line x1="8" y1="2" x2="8" y2="23"/><line x1="16" y1="2" x2="16" y2="23"/></g></svg>
<div style="position:absolute;left:2922px;top:170px;width:21px;height:9px;background:transparent;border:2.5px solid #555;border-radius:1px;box-sizing:border-box;background:#ddd;"></div>
<div style="position:absolute;left:2962px;top:170px;width:21px;height:18px;background:transparent;border:2.5px solid #555;border-top-width:4px;box-sizing:border-box;"></div>
<svg style="position:absolute;left:3002px;top:168px" width="22" height="20"><g stroke="#333" stroke-width="3.6"><line x1="2" y1="2" x2="20" y2="18"/><line x1="20" y1="2" x2="2" y2="18"/></g></svg>
<div style="position:absolute;left:501px;top:197px;width:410px;height:391px;background:#ffffff;"></div>
<div style="position:absolute;left:501px;top:197px;width:366px;height:38px;background:linear-gradient(180deg,#ffffff 0px,#ffffff 12px,#f4f5f8 13px,#eceef2 36px);"></div>
<div style="position:absolute;left:501px;top:233px;width:366px;height:2px;background:#dadada;"></div>
<div style="position:absolute;left:805px;top:200px;width:2px;height:33px;background:#e4e4e4;"></div>
<div style="position:absolute;left:508px;top:208.91px;font-family:'Liberation Sans', sans-serif;font-size:22.08px;line-height:22.08px;color:#111;white-space:nowrap;transform:scaleX(0.9906);transform-origin:left center;-webkit-text-stroke:0.3px #111;">Series</div>
<div style="position:absolute;left:501px;top:235px;width:366px;height:35px;background:#f0f0f0;"></div>
<div style="position:absolute;left:501px;top:268px;width:366px;height:2px;background:#dcdcdc;"></div>
<div style="position:absolute;left:805px;top:235px;width:2px;height:35px;background:#dcdcdc;"></div>
<div style="position:absolute;left:633.5px;top:242.41px;font-family:'Liberation Sans', sans-serif;font-size:22.08px;line-height:22.08px;color:#111;white-space:nowrap;transform:scaleX(1.0434);transform-origin:left center;-webkit-text-stroke:0.3px #111;">DCEndInit</div>
<svg style="position:absolute;left:512px;top:243.5px" width="17" height="9"><polygon points="0,0 17,0 8.5,9" fill="#3c3c3c"/></svg>
<div style="position:absolute;left:811px;top:241.5px;width:48px;height:21px;background:#a0a0a0;"></div>
<div style="position:absolute;left:501px;top:270px;width:366px;height:38px;background:#0078d7;"></div>
<div style="position:absolute;left:805px;top:270px;width:2px;height:38px;background:#3a8ad8;"></div>
<div style="position:absolute;left:665px;top:281.41px;font-family:'Liberation Sans', sans-serif;font-size:22.08px;line-height:22.08px;color:#fff;white-space:nowrap;-webkit-text-stroke:0.3px #fff;">3</div>
<div style="position:absolute;left:811px;top:279.5px;width:48px;height:21px;background:#e6bf22;"></div>
<div style="position:absolute;left:501px;top:269px;width:366px;height:2px;background:repeating-linear-gradient(90deg,#000 0 6px,transparent 6px 9px);"></div>
<div style="position:absolute;left:501px;top:306px;width:366px;height:2px;background:repeating-linear-gradient(90deg,#000 0 6px,transparent 6px 9px);"></div>
<div style="position:absolute;left:501px;top:308px;width:366px;height:39px;background:#f0f0f0;"></div>
<div style="position:absolute;left:501px;top:345px;width:366px;height:2px;background:#dcdcdc;"></div>
<div style="position:absolute;left:805px;top:308px;width:2px;height:39px;background:#dcdcdc;"></div>
<div style="position:absolute;left:602px;top:320.41px;font-family:'Liberation Sans', sans-serif;font-size:22.08px;line-height:22.08px;color:#111;white-space:nowrap;transform:scaleX(1.1099);transform-origin:left center;-webkit-text-stroke:0.3px #111;">MethodRuntime</div>
<svg style="position:absolute;left:516px;top:317.5px" width="12" height="18"><polygon points="1,1 10,9.0 1,17" fill="none" stroke="#3c3c3c" stroke-width="1.6"/></svg>
<div style="position:absolute;left:811px;top:317.5px;width:48px;height:21px;background:#a0a0a0;"></div>
<div style="position:absolute;left:501px;top:347px;width:366px;height:39px;background:#f0f0f0;"></div>
<div style="position:absolute;left:501px;top:384px;width:366px;height:2px;background:#dcdcdc;"></div>
<div style="position:absolute;left:805px;top:347px;width:2px;height:39px;background:#dcdcdc;"></div>
<div style="position:absolute;left:602px;top:359.41px;font-family:'Liberation Sans', sans-serif;font-size:22.08px;line-height:22.08px;color:#111;white-space:nowrap;transform:scaleX(1.0465);transform-origin:left center;-webkit-text-stroke:0.3px #111;">ScriptContextRu...</div>
<svg style="position:absolute;left:512px;top:357.5px" width="17" height="9"><polygon points="0,0 17,0 8.5,9" fill="#3c3c3c"/></svg>
<div style="position:absolute;left:811px;top:356.5px;width:48px;height:21px;background:#a0a0a0;"></div>
<div style="position:absolute;left:501px;top:386px;width:366px;height:38px;background:#f0f0f0;"></div>
<div style="position:absolute;left:501px;top:422px;width:366px;height:2px;background:#dcdcdc;"></div>
<div style="position:absolute;left:805px;top:386px;width:2px;height:38px;background:#dcdcdc;"></div>
<div style="position:absolute;left:633.5px;top:397.41px;font-family:'Liberation Sans', sans-serif;font-size:22.08px;line-height:22.08px;color:#111;white-space:nowrap;transform:scaleX(1.0202);transform-origin:left center;-webkit-text-stroke:0.3px #111;">SourceDCEnd</div>
<svg style="position:absolute;left:516px;top:395.0px" width="12" height="18"><polygon points="1,1 10,9.0 1,17" fill="none" stroke="#3c3c3c" stroke-width="1.6"/></svg>
<div style="position:absolute;left:811px;top:395.5px;width:48px;height:21px;background:#a0a0a0;"></div>
<div style="position:absolute;left:501px;top:424px;width:366px;height:38px;background:#f0f0f0;"></div>
<div style="position:absolute;left:501px;top:460px;width:366px;height:2px;background:#dcdcdc;"></div>
<div style="position:absolute;left:805px;top:424px;width:2px;height:38px;background:#dcdcdc;"></div>
<div style="position:absolute;left:633.5px;top:435.41px;font-family:'Liberation Sans', sans-serif;font-size:22.08px;line-height:22.08px;color:#111;white-space:nowrap;transform:scaleX(1.0534);transform-origin:left center;-webkit-text-stroke:0.3px #111;">ScriptContext...</div>
<svg style="position:absolute;left:512px;top:434.0px" width="17" height="9"><polygon points="0,0 17,0 8.5,9" fill="#3c3c3c"/></svg>
<div style="position:absolute;left:811px;top:433.5px;width:48px;height:21px;background:#a0a0a0;"></div>
<div style="position:absolute;left:501px;top:462px;width:366px;height:39px;background:#f0f0f0;"></div>
<div style="position:absolute;left:501px;top:499px;width:366px;height:2px;background:#dcdcdc;"></div>
<div style="position:absolute;left:805px;top:462px;width:2px;height:39px;background:#dcdcdc;"></div>
<div style="position:absolute;left:665px;top:474.41px;font-family:'Liberation Sans', sans-serif;font-size:22.08px;line-height:22.08px;color:#111;white-space:nowrap;-webkit-text-stroke:0.3px #111;">8</div>
<div style="position:absolute;left:811px;top:471.5px;width:48px;height:21px;background:#e6ab22;"></div>
<div style="position:absolute;left:501px;top:501px;width:366px;height:38px;background:#f0f0f0;"></div>
<div style="position:absolute;left:805px;top:501px;width:2px;height:38px;background:#dcdcdc;"></div>
<div style="position:absolute;left:570px;top:512.41px;font-family:'Liberation Sans', sans-serif;font-size:22.08px;line-height:22.08px;color:#111;white-space:nowrap;transform:scaleX(1.0692);transform-origin:left center;-webkit-text-stroke:0.3px #111;">TextInputHost.exe &lt;...</div>
<svg style="position:absolute;left:516px;top:510.0px" width="12" height="18"><polygon points="1,1 10,9.0 1,17" fill="none" stroke="#3c3c3c" stroke-width="1.6"/></svg>
<div style="position:absolute;left:811px;top:510.5px;width:48px;height:21px;background:#a0a0a0;"></div>
<div style="position:absolute;left:867px;top:235px;width:34px;height:304px;background:#f0f0f0;"></div>
<div style="position:absolute;left:867px;top:325px;width:34px;height:58px;background:#cdcdcd;"></div>
<svg style="position:absolute;left:875px;top:252px" width="18" height="12"><polyline points="2,10 9,3 16,10" fill="none" stroke="#8a8a8a" stroke-width="2"/></svg>
<svg style="position:absolute;left:875px;top:515px" width="18" height="12"><polyline points="2,2 9,9 16,2" fill="none" stroke="#8a8a8a" stroke-width="2"/></svg>
<div style="position:absolute;left:901px;top:197px;width:10px;height:391px;background:#d0d0d0;"></div>
<div style="position:absolute;left:911px;top:197px;width:2122px;height:391px;background:#ffffff;"></div>
<div style="position:absolute;left:2022px;top:241px;width:978px;height:298px;background:#e8e8e8;"></div>
<div style="position:absolute;left:1071px;top:254px;width:1929px;height:2px;background:#d4d4d4;"></div>
<div style="position:absolute;left:1071px;top:292px;width:1929px;height:2px;background:#d4d4d4;"></div>
<div style="position:absolute;left:1071px;top:331px;width:1929px;height:2px;background:#d4d4d4;"></div>
<div style="position:absolute;left:1071px;top:369px;width:1929px;height:2px;background:#d4d4d4;"></div>
<div style="position:absolute;left:1071px;top:408px;width:1929px;height:2px;background:#d4d4d4;"></div>
<div style="position:absolute;left:1071px;top:446px;width:1929px;height:2px;background:#d4d4d4;"></div>
<div style="position:absolute;left:1071px;top:485px;width:1929px;height:2px;background:#d4d4d4;"></div>
<div style="position:absolute;left:1071px;top:523px;width:1929px;height:2px;background:#d4d4d4;"></div>
<div style="position:absolute;left:3000px;top:241px;width:33px;height:298px;background:#f0f0f0;"></div>
<div style="position:absolute;left:3000px;top:327px;width:33px;height:58px;background:#cdcdcd;"></div>
<svg style="position:absolute;left:3007px;top:253px" width="18" height="12"><polyline points="2,10 9,3 16,10" fill="none" stroke="#8a8a8a" stroke-width="2"/></svg>
<svg style="position:absolute;left:3007px;top:515px" width="18" height="12"><polyline points="2,2 9,9 16,2" fill="none" stroke="#8a8a8a" stroke-width="2"/></svg>
<div style="position:absolute;left:2128px;top:339.31px;font-family:'Liberation Sans', sans-serif;font-size:116px;line-height:116px;color:rgba(140,140,140,0.58);white-space:nowrap;transform:scaleX(0.9355);transform-origin:left center;">Trace Rundown</div>
<svg style="position:absolute;left:2000px;top:230px" width="300" height="320"><polygon points="131.2,25.0 139.0,13.8 146.8,25.0 139.0,36.2" fill="#d8b850" fill-opacity="0.85"/><polygon points="226.2,25.0 234.0,13.8 241.8,25.0 234.0,36.2" fill="#d8b850" fill-opacity="0.85"/><path d="M134.5 11 H237 V15 H236.7 L234.5 26.5 Q232 30 229.5 26.5 L227.3 15 H142.7 L140.5 26.5 Q138 30 135.5 26.5 L133 14 Q133 11 134.5 11 Z" fill="#666"/><polygon points="131.2,63.4 139.0,52.2 146.8,63.4 139.0,74.6" fill="#d4ac28" fill-opacity="1.0"/><polygon points="226.2,63.4 234.0,52.2 241.8,63.4 234.0,74.6" fill="#d4ac28" fill-opacity="1.0"/><polygon points="129.7,101.9 137.5,90.7 145.3,101.9 137.5,113.1" fill="#30d040" fill-opacity="1.0"/><polygon points="182.2,101.9 190.0,90.7 197.8,101.9 190.0,113.1" fill="#48d858" fill-opacity="0.85"/><polygon points="195.2,101.9 203.0,90.7 210.8,101.9 203.0,113.1" fill="#48d858" fill-opacity="0.85"/><polygon points="225.2,101.9 233.0,90.7 240.8,101.9 233.0,113.1" fill="#48d858" fill-opacity="0.85"/><polygon points="131.2,140.4 139.0,129.2 146.8,140.4 139.0,151.6" fill="#d8b050" fill-opacity="0.8"/><polygon points="136.2,140.4 144.0,129.2 151.8,140.4 144.0,151.6" fill="#40d8c0" fill-opacity="0.8"/><polygon points="172.2,140.4 180.0,129.2 187.8,140.4 180.0,151.6" fill="#a8a040" fill-opacity="0.8"/><polygon points="177.2,140.4 185.0,129.2 192.8,140.4 185.0,151.6" fill="#40d8c0" fill-opacity="0.6"/><polygon points="176.2,140.4 184.0,129.2 191.8,140.4 184.0,151.6" fill="#d4a030" fill-opacity="0.7"/><polygon points="201.2,140.4 209.0,129.2 216.8,140.4 209.0,151.6" fill="#a8a040" fill-opacity="0.9"/><polygon points="226.2,140.4 234.0,129.2 241.8,140.4 234.0,151.6" fill="#d4a030" fill-opacity="0.9"/><path d="M134.5 127 H238 V131 H237.7 L235.5 142.5 Q233 146 230.5 142.5 L228.3 131 H142.7 L140.5 142.5 Q138 146 135.5 142.5 L133 130 Q133 127 134.5 127 Z" fill="#666"/><polygon points="135.7,178.8 143.5,167.6 151.3,178.8 143.5,190.0" fill="#40d0b8" fill-opacity="0.8"/><polygon points="171.7,178.8 179.5,167.6 187.3,178.8 179.5,190.0" fill="#40d0b8" fill-opacity="0.8"/><polygon points="178.2,178.8 186.0,167.6 193.8,178.8 186.0,190.0" fill="#40d0b8" fill-opacity="0.8"/><polygon points="201.2,178.8 209.0,167.6 216.8,178.8 209.0,190.0" fill="#40d0b8" fill-opacity="0.8"/><polygon points="225.7,178.8 233.5,167.6 241.3,178.8 233.5,190.0" fill="#40d0b8" fill-opacity="0.8"/><polygon points="131.2,217.2 139.0,206.1 146.8,217.2 139.0,228.4" fill="#d8aa40" fill-opacity="0.8"/><polygon points="171.7,217.2 179.5,206.1 187.3,217.2 179.5,228.4" fill="#d8aa40" fill-opacity="0.8"/><polygon points="176.7,217.2 184.5,206.1 192.3,217.2 184.5,228.4" fill="#d8aa40" fill-opacity="0.8"/><polygon points="201.2,217.2 209.0,206.1 216.8,217.2 209.0,228.4" fill="#d8aa40" fill-opacity="0.8"/><polygon points="225.7,217.2 233.5,206.1 241.3,217.2 233.5,228.4" fill="#d8aa40" fill-opacity="0.8"/><path d="M134.5 203.5 H238 V207.5 H237.7 L235.5 219.0 Q233 222.5 230.5 219.0 L228.3 207.5 H142.7 L140.5 219.0 Q138 222.5 135.5 219.0 L133 206.5 Q133 203.5 134.5 203.5 Z" fill="#666"/><polygon points="131.2,255.7 139.0,244.5 146.8,255.7 139.0,266.9" fill="#d4a02c" fill-opacity="1.0"/><polygon points="171.7,255.7 179.5,244.5 187.3,255.7 179.5,266.9" fill="#d4a02c" fill-opacity="1.0"/><polygon points="176.7,255.7 184.5,244.5 192.3,255.7 184.5,266.9" fill="#d4a02c" fill-opacity="1.0"/><polygon points="201.2,255.7 209.0,244.5 216.8,255.7 209.0,266.9" fill="#d4a02c" fill-opacity="1.0"/><polygon points="225.7,255.7 233.5,244.5 241.3,255.7 233.5,266.9" fill="#d4a02c" fill-opacity="1.0"/><polygon points="112.5,294.1500000000001 120,284.1500000000001 127.5,294.1500000000001 120,304.1500000000001" fill="none" stroke="#60d060" stroke-width="1"/><polyline points="123,286.1500000000001 118,294.1500000000001 123,302.1500000000001" fill="none" stroke="#8040c0" stroke-width="1.2"/><polygon points="119.2,294.2 127.0,283.0 134.8,294.2 127.0,305.4" fill="#3aa870" fill-opacity="1.0"/><polygon points="225.2,294.2 233.0,283.0 240.8,294.2 233.0,305.4" fill="#3aa870" fill-opacity="1.0"/><rect x="137.1" y="89.6" width="96.8" height="24.8" fill="none" stroke="#5c5c5c" stroke-width="2.3"/><rect x="142.1" y="165.6" width="91.8" height="24.8" fill="none" stroke="#5c5c5c" stroke-width="2.3"/><rect x="122.1" y="281.6" width="111.8" height="24.8" fill="none" stroke="#5c5c5c" stroke-width="2.3"/></svg>
<div style="position:absolute;left:2234px;top:241px;width:2px;height:298px;background:#7a7a7a;"></div>
<div style="position:absolute;left:2232px;top:241px;width:2px;height:298px;background:#1a78d0;"></div>
<div style="position:absolute;left:2265px;top:303px;width:366px;height:194px;background:#f0f0f6;border:2px solid #6d6d6d;box-sizing:border-box;"></div>
<div style="position:absolute;left:2280px;top:318.80px;font-family:'Liberation Sans', sans-serif;font-size:28px;line-height:28px;color:#111;white-space:nowrap;transform:scaleX(0.9549);transform-origin:left center;-webkit-text-stroke:0.3px #111;">Selection</div>
<div style="position:absolute;left:2290px;top:372.30px;font-family:'Liberation Sans', sans-serif;font-size:28px;line-height:28px;color:#2c2c2c;white-space:nowrap;transform:scaleX(0.9330);transform-origin:left center;">Duration</div>
<div style="position:absolute;left:1615.5px;width:1000px;text-align:right;top:372.30px;font-family:'Liberation Sans', sans-serif;font-size:28px;line-height:28px;color:#2c2c2c;white-space:nowrap;"><span style="display:inline-block;transform:scaleX(0.8704);transform-origin:right center;">0.000000001s</span></div>
<div style="position:absolute;left:2290px;top:408.80px;font-family:'Liberation Sans', sans-serif;font-size:28px;line-height:28px;color:#2c2c2c;white-space:nowrap;transform:scaleX(0.9248);transform-origin:left center;">Start Time</div>
<div style="position:absolute;left:1615.5px;width:1000px;text-align:right;top:408.80px;font-family:'Liberation Sans', sans-serif;font-size:28px;line-height:28px;color:#2c2c2c;white-space:nowrap;"><span style="display:inline-block;transform:scaleX(0.8779);transform-origin:right center;">21.970434400s</span></div>
<div style="position:absolute;left:2290px;top:446.30px;font-family:'Liberation Sans', sans-serif;font-size:28px;line-height:28px;color:#2c2c2c;white-space:nowrap;transform:scaleX(0.9089);transform-origin:left center;">End Time</div>
<div style="position:absolute;left:1615.5px;width:1000px;text-align:right;top:446.30px;font-family:'Liberation Sans', sans-serif;font-size:28px;line-height:28px;color:#2c2c2c;white-space:nowrap;"><span style="display:inline-block;transform:scaleX(0.8572);transform-origin:right center;">21.970434401s</span></div>
<div style="position:absolute;left:1071px;top:538.7px;width:1929px;height:1.7px;background:#000;"></div>
<svg style="position:absolute;left:1071px;top:539px" width="1931" height="30"><rect x="22.44" y="1.4" width="2" height="10.5" fill="#a0a0a0"/><rect x="48.89" y="1.4" width="2" height="10.5" fill="#a0a0a0"/><rect x="75.34" y="1.4" width="2" height="10.5" fill="#a0a0a0"/><rect x="101.68" y="1.4" width="2.2" height="22.5" fill="#000"/><rect x="128.22" y="1.4" width="2" height="10.5" fill="#a0a0a0"/><rect x="154.67" y="1.4" width="2" height="10.5" fill="#a0a0a0"/><rect x="181.12" y="1.4" width="2" height="10.5" fill="#a0a0a0"/><rect x="207.46" y="1.4" width="2.2" height="22.5" fill="#000"/><rect x="234.01" y="1.4" width="2" height="10.5" fill="#a0a0a0"/><rect x="260.45" y="1.4" width="2" height="10.5" fill="#a0a0a0"/><rect x="286.89" y="1.4" width="2" height="10.5" fill="#a0a0a0"/><rect x="313.24" y="1.4" width="2.2" height="22.5" fill="#000"/><rect x="339.79" y="1.4" width="2" height="10.5" fill="#a0a0a0"/><rect x="366.23" y="1.4" width="2" height="10.5" fill="#a0a0a0"/><rect x="392.67" y="1.4" width="2" height="10.5" fill="#a0a0a0"/><rect x="419.02" y="1.4" width="2.2" height="22.5" fill="#000"/><rect x="445.57" y="1.4" width="2" height="10.5" fill="#a0a0a0"/><rect x="472.01" y="1.4" width="2" height="10.5" fill="#a0a0a0"/><rect x="498.45" y="1.4" width="2" height="10.5" fill="#a0a0a0"/><rect x="524.80" y="1.4" width="2.2" height="22.5" fill="#000"/><rect x="551.35" y="1.4" width="2" height="10.5" fill="#a0a0a0"/><rect x="577.79" y="1.4" width="2" height="10.5" fill="#a0a0a0"/><rect x="604.24" y="1.4" width="2" height="10.5" fill="#a0a0a0"/><rect x="630.58" y="1.4" width="2.2" height="22.5" fill="#000"/><rect x="657.12" y="1.4" width="2" height="10.5" fill="#a0a0a0"/><rect x="683.57" y="1.4" width="2" height="10.5" fill="#a0a0a0"/><rect x="710.01" y="1.4" width="2" height="10.5" fill="#a0a0a0"/><rect x="736.36" y="1.4" width="2.2" height="22.5" fill="#000"/><rect x="762.90" y="1.4" width="2" height="10.5" fill="#a0a0a0"/><rect x="789.35" y="1.4" width="2" height="10.5" fill="#a0a0a0"/><rect x="815.80" y="1.4" width="2" height="10.5" fill="#a0a0a0"/><rect x="842.14" y="1.4" width="2.2" height="22.5" fill="#000"/><rect x="868.68" y="1.4" width="2" height="10.5" fill="#a0a0a0"/><rect x="895.13" y="1.4" width="2" height="10.5" fill="#a0a0a0"/><rect x="921.58" y="1.4" width="2" height="10.5" fill="#a0a0a0"/><rect x="947.92" y="1.4" width="2.2" height="22.5" fill="#000"/><rect x="974.47" y="1.4" width="2" height="10.5" fill="#a0a0a0"/><rect x="1000.91" y="1.4" width="2" height="10.5" fill="#a0a0a0"/><rect x="1027.36" y="1.4" width="2" height="10.5" fill="#a0a0a0"/><rect x="1053.70" y="1.4" width="2.2" height="22.5" fill="#000"/><rect x="1080.24" y="1.4" width="2" height="10.5" fill="#a0a0a0"/><rect x="1106.69" y="1.4" width="2" height="10.5" fill="#a0a0a0"/><rect x="1133.14" y="1.4" width="2" height="10.5" fill="#a0a0a0"/><rect x="1159.48" y="1.4" width="2.2" height="22.5" fill="#000"/><rect x="1186.03" y="1.4" width="2" height="10.5" fill="#a0a0a0"/><rect x="1212.47" y="1.4" width="2" height="10.5" fill="#a0a0a0"/><rect x="1238.91" y="1.4" width="2" height="10.5" fill="#a0a0a0"/><rect x="1265.26" y="1.4" width="2.2" height="22.5" fill="#000"/><rect x="1291.81" y="1.4" width="2" height="10.5" fill="#a0a0a0"/><rect x="1318.25" y="1.4" width="2" height="10.5" fill="#a0a0a0"/><rect x="1344.69" y="1.4" width="2" height="10.5" fill="#a0a0a0"/><rect x="1371.04" y="1.4" width="2.2" height="22.5" fill="#000"/><rect x="1397.59" y="1.4" width="2" height="10.5" fill="#a0a0a0"/><rect x="1424.03" y="1.4" width="2" height="10.5" fill="#a0a0a0"/><rect x="1450.47" y="1.4" width="2" height="10.5" fill="#a0a0a0"/><rect x="1476.82" y="1.4" width="2.2" height="22.5" fill="#000"/><rect x="1503.36" y="1.4" width="2" height="10.5" fill="#a0a0a0"/><rect x="1529.81" y="1.4" width="2" height="10.5" fill="#a0a0a0"/><rect x="1556.26" y="1.4" width="2" height="10.5" fill="#a0a0a0"/><rect x="1582.60" y="1.4" width="2.2" height="22.5" fill="#000"/><rect x="1609.14" y="1.4" width="2" height="10.5" fill="#a0a0a0"/><rect x="1635.59" y="1.4" width="2" height="10.5" fill="#a0a0a0"/><rect x="1662.03" y="1.4" width="2" height="10.5" fill="#a0a0a0"/><rect x="1688.38" y="1.4" width="2.2" height="22.5" fill="#000"/><rect x="1714.93" y="1.4" width="2" height="10.5" fill="#a0a0a0"/><rect x="1741.37" y="1.4" width="2" height="10.5" fill="#a0a0a0"/><rect x="1767.82" y="1.4" width="2" height="10.5" fill="#a0a0a0"/><rect x="1794.16" y="1.4" width="2.2" height="22.5" fill="#000"/><rect x="1820.70" y="1.4" width="2" height="10.5" fill="#a0a0a0"/><rect x="1847.15" y="1.4" width="2" height="10.5" fill="#a0a0a0"/><rect x="1873.60" y="1.4" width="2" height="10.5" fill="#a0a0a0"/><rect x="1899.94" y="1.4" width="2.2" height="22.5" fill="#000"/><rect x="1926.49" y="1.4" width="2" height="10.5" fill="#a0a0a0"/></svg>
<div style="position:absolute;left:1071px;top:563.5px;width:12px;height:26px;overflow:hidden"><div style="position:absolute;left:-497.5px;width:1000px;text-align:center;top:4.76px;font-family:'Liberation Sans', sans-serif;font-size:18px;line-height:18px;color:#111;white-space:nowrap;-webkit-text-stroke:0.3px #111;">0</div>
</div>
<div style="position:absolute;left:673.78px;width:1000px;text-align:center;top:568.26px;font-family:'Liberation Sans', sans-serif;font-size:18px;line-height:18px;color:#111;white-space:nowrap;-webkit-text-stroke:0.3px #111;">2</div>
<div style="position:absolute;left:779.56px;width:1000px;text-align:center;top:568.26px;font-family:'Liberation Sans', sans-serif;font-size:18px;line-height:18px;color:#111;white-space:nowrap;-webkit-text-stroke:0.3px #111;">4</div>
<div style="position:absolute;left:885.3400000000001px;width:1000px;text-align:center;top:568.26px;font-family:'Liberation Sans', sans-serif;font-size:18px;line-height:18px;color:#111;white-space:nowrap;-webkit-text-stroke:0.3px #111;">6</div>
<div style="position:absolute;left:991.1199999999999px;width:1000px;text-align:center;top:568.26px;font-family:'Liberation Sans', sans-serif;font-size:18px;line-height:18px;color:#111;white-space:nowrap;-webkit-text-stroke:0.3px #111;">8</div>
<div style="position:absolute;left:1096.9px;width:1000px;text-align:center;top:568.26px;font-family:'Liberation Sans', sans-serif;font-size:18px;line-height:18px;color:#111;white-space:nowrap;-webkit-text-stroke:0.3px #111;">10</div>
<div style="position:absolute;left:1202.68px;width:1000px;text-align:center;top:568.26px;font-family:'Liberation Sans', sans-serif;font-size:18px;line-height:18px;color:#111;white-space:nowrap;-webkit-text-stroke:0.3px #111;">12</div>
<div style="position:absolute;left:1308.46px;width:1000px;text-align:center;top:568.26px;font-family:'Liberation Sans', sans-serif;font-size:18px;line-height:18px;color:#111;white-space:nowrap;-webkit-text-stroke:0.3px #111;">14</div>
<div style="position:absolute;left:1414.24px;width:1000px;text-align:center;top:568.26px;font-family:'Liberation Sans', sans-serif;font-size:18px;line-height:18px;color:#111;white-space:nowrap;-webkit-text-stroke:0.3px #111;">16</div>
<div style="position:absolute;left:1520.02px;width:1000px;text-align:center;top:568.26px;font-family:'Liberation Sans', sans-serif;font-size:18px;line-height:18px;color:#111;white-space:nowrap;-webkit-text-stroke:0.3px #111;">18</div>
<div style="position:absolute;left:1625.8000000000002px;width:1000px;text-align:center;top:568.26px;font-family:'Liberation Sans', sans-serif;font-size:18px;line-height:18px;color:#111;white-space:nowrap;-webkit-text-stroke:0.3px #111;">20</div>
<div style="position:absolute;left:1837.3600000000001px;width:1000px;text-align:center;top:568.26px;font-family:'Liberation Sans', sans-serif;font-size:18px;line-height:18px;color:#111;white-space:nowrap;-webkit-text-stroke:0.3px #111;">24</div>
<div style="position:absolute;left:1943.1400000000003px;width:1000px;text-align:center;top:568.26px;font-family:'Liberation Sans', sans-serif;font-size:18px;line-height:18px;color:#111;white-space:nowrap;-webkit-text-stroke:0.3px #111;">26</div>
<div style="position:absolute;left:2048.92px;width:1000px;text-align:center;top:568.26px;font-family:'Liberation Sans', sans-serif;font-size:18px;line-height:18px;color:#111;white-space:nowrap;-webkit-text-stroke:0.3px #111;">28</div>
<div style="position:absolute;left:2154.7px;width:1000px;text-align:center;top:568.26px;font-family:'Liberation Sans', sans-serif;font-size:18px;line-height:18px;color:#111;white-space:nowrap;-webkit-text-stroke:0.3px #111;">30</div>
<div style="position:absolute;left:2260.48px;width:1000px;text-align:center;top:568.26px;font-family:'Liberation Sans', sans-serif;font-size:18px;line-height:18px;color:#111;white-space:nowrap;-webkit-text-stroke:0.3px #111;">32</div>
<div style="position:absolute;left:2366.26px;width:1000px;text-align:center;top:568.26px;font-family:'Liberation Sans', sans-serif;font-size:18px;line-height:18px;color:#111;white-space:nowrap;-webkit-text-stroke:0.3px #111;">34</div>
<div style="position:absolute;left:2472.04px;width:1000px;text-align:center;top:568.26px;font-family:'Liberation Sans', sans-serif;font-size:18px;line-height:18px;color:#111;white-space:nowrap;-webkit-text-stroke:0.3px #111;">36</div>
<div style="position:absolute;left:2231.5px;top:541px;width:3px;height:10px;background:#000;"></div>
<div style="position:absolute;left:2167px;top:550px;width:132px;height:35px;background:#ffffff;border:3px solid #111;box-sizing:border-box;"></div>
<div style="position:absolute;left:1732.5px;width:1000px;text-align:center;top:561.19px;font-family:'Liberation Sans', sans-serif;font-size:17.5px;line-height:17.5px;color:#111;white-space:nowrap;-webkit-text-stroke:0.3px #111;"><span style="display:inline-block;transform:scaleX(0.9944);transform-origin:center center;">22.008573366s</span></div>
<div style="position:absolute;left:501px;top:587px;width:2532px;height:9px;background:#d2d2d2;"></div>
<div style="position:absolute;left:501px;top:596px;width:2499px;height:40px;background:linear-gradient(180deg,#ffffff 0px,#ffffff 16px,#f4f5f8 17px,#eceef2 38px);"></div>
<div style="position:absolute;left:501px;top:634px;width:2499px;height:2px;background:#d8d8d8;"></div>
<div style="position:absolute;left:589px;top:598px;width:3px;height:36px;background:#e6e6e6;"></div>
<div style="position:absolute;left:989px;top:598px;width:3px;height:36px;background:#e6e6e6;"></div>
<div style="position:absolute;left:1289px;top:598px;width:3px;height:36px;background:#e6e6e6;"></div>
<div style="position:absolute;left:1449px;top:598px;width:3px;height:36px;background:#e6e6e6;"></div>
<div style="position:absolute;left:1703px;top:598px;width:3px;height:36px;background:#e6e6e6;"></div>
<div style="position:absolute;left:2260px;top:598px;width:3px;height:36px;background:#e6e6e6;"></div>
<div style="position:absolute;left:2320px;top:598px;width:3px;height:36px;background:#e6e6e6;"></div>
<div style="position:absolute;left:2420px;top:598px;width:3px;height:36px;background:#e6e6e6;"></div>
<div style="position:absolute;left:2898px;top:598px;width:3px;height:36px;background:#e6e6e6;"></div>
<div style="position:absolute;left:2570px;top:596px;width:158px;height:40px;background:linear-gradient(180deg,#f2f9fd 0%,#e9f5fc 40%,#dcedf8 100%);border:2px solid #8ed2f4;box-sizing:border-box;"></div>
<svg style="position:absolute;left:2641px;top:599px" width="16" height="9"><polygon points="0,0 15,0 7.5,8" fill="#5a8ab0"/></svg>
<div style="position:absolute;left:1721px;width:1000px;text-align:right;top:600.15px;font-family:'Liberation Sans', sans-serif;font-size:14px;line-height:14px;color:#111;white-space:nowrap;-webkit-text-stroke:0.3px #111;">0</div>
<div style="position:absolute;left:1722px;width:1000px;text-align:right;top:617.88px;font-family:'Liberation Sans', sans-serif;font-size:15.5px;line-height:15.5px;color:#111;white-space:nowrap;-webkit-text-stroke:0.3px #111;">Sum</div>
<div style="position:absolute;left:507.5px;top:607.91px;font-family:'Liberation Sans', sans-serif;font-size:22.08px;line-height:22.08px;color:#111;white-space:nowrap;transform:scaleX(1.0389);transform-origin:left center;-webkit-text-stroke:0.3px #111;">Line #</div>
<div style="position:absolute;left:597.5px;top:607.91px;font-family:'Liberation Sans', sans-serif;font-size:22.08px;line-height:22.08px;color:#111;white-space:nowrap;transform:scaleX(1.0662);transform-origin:left center;-webkit-text-stroke:0.3px #111;">Provider Name</div>
<div style="position:absolute;left:997.5px;top:607.91px;font-family:'Liberation Sans', sans-serif;font-size:22.08px;line-height:22.08px;color:#111;white-space:nowrap;transform:scaleX(0.9842);transform-origin:left center;-webkit-text-stroke:0.3px #111;">Process</div>
<div style="position:absolute;left:1297.5px;top:607.91px;font-family:'Liberation Sans', sans-serif;font-size:22.08px;line-height:22.08px;color:#111;white-space:nowrap;transform:scaleX(1.0187);transform-origin:left center;-webkit-text-stroke:0.3px #111;">Task Name</div>
<div style="position:absolute;left:1457.5px;top:607.91px;font-family:'Liberation Sans', sans-serif;font-size:22.08px;line-height:22.08px;color:#111;white-space:nowrap;transform:scaleX(1.0799);transform-origin:left center;-webkit-text-stroke:0.3px #111;">Opcode Name</div>
<div style="position:absolute;left:1711px;top:607.91px;font-family:'Liberation Sans', sans-serif;font-size:22.08px;line-height:22.08px;color:#111;white-space:nowrap;transform:scaleX(0.9775);transform-origin:left center;-webkit-text-stroke:0.3px #111;">Id</div>
<div style="position:absolute;left:1880px;top:607.91px;font-family:'Liberation Sans', sans-serif;font-size:22.08px;line-height:22.08px;color:#111;white-space:nowrap;transform:scaleX(1.0535);transform-origin:left center;-webkit-text-stroke:0.3px #111;">Event Name</div>
<div style="position:absolute;left:2268.75px;top:607.91px;font-family:'Liberation Sans', sans-serif;font-size:22.08px;line-height:22.08px;color:#111;white-space:nowrap;transform:scaleX(0.8952);transform-origin:left center;-webkit-text-stroke:0.3px #111;">C...</div>
<div style="position:absolute;left:2328.75px;top:607.91px;font-family:'Liberation Sans', sans-serif;font-size:22.08px;line-height:22.08px;color:#111;white-space:nowrap;transform:scaleX(0.9796);transform-origin:left center;-webkit-text-stroke:0.3px #111;">Thre...</div>
<div style="position:absolute;left:2428.75px;top:607.91px;font-family:'Liberation Sans', sans-serif;font-size:22.08px;line-height:22.08px;color:#111;white-space:nowrap;transform:scaleX(0.9959);transform-origin:left center;-webkit-text-stroke:0.3px #111;">Field 1</div>
<div style="position:absolute;left:2575px;top:607.91px;font-family:'Liberation Sans', sans-serif;font-size:22.08px;line-height:22.08px;color:#111;white-space:nowrap;transform:scaleX(1.0777);transform-origin:left center;-webkit-text-stroke:0.3px #111;">Count</div>
<div style="position:absolute;left:2745px;top:607.91px;font-family:'Liberation Sans', sans-serif;font-size:22.08px;line-height:22.08px;color:#111;white-space:nowrap;transform:scaleX(1.0171);transform-origin:left center;-webkit-text-stroke:0.3px #111;">Time (s)</div>
<div style="position:absolute;left:2905px;top:607.91px;font-family:'Liberation Sans', sans-serif;font-size:22.08px;line-height:22.08px;color:#111;white-space:nowrap;transform:scaleX(1.0383);transform-origin:left center;-webkit-text-stroke:0.3px #111;">Legend</div>
<div style="position:absolute;left:501px;top:636px;width:2499px;height:327px;overflow:hidden">
<div style="position:absolute;left:0px;top:0px;width:1363px;height:327px;background:#f0f0f0;"></div>
<div style="position:absolute;left:1373px;top:0px;width:696px;height:327px;background:#ffffff;"></div>
<div style="position:absolute;left:2069px;top:0px;width:430px;height:327px;background:#f0f0f0;"></div>
<div style="position:absolute;left:0px;top:19px;width:2499px;height:2px;background:#d8d8d8;"></div>
<div style="position:absolute;left:-915px;width:1000px;text-align:right;top:-7.02px;font-family:'Liberation Sans', sans-serif;font-size:22.08px;line-height:22.08px;color:#111;white-space:nowrap;-webkit-text-stroke:0.3px #111;">6</div>
<div style="position:absolute;left:986.5px;top:-7.02px;font-family:'Liberation Sans', sans-serif;font-size:22.08px;line-height:22.08px;color:#111;white-space:nowrap;transform:scaleX(1.0633);transform-origin:left center;-webkit-text-stroke:0.3px #111;">MethodDCEnd</div>
<svg style="position:absolute;left:1218px;top:-8px" width="12" height="18"><polygon points="1,1 10,9.0 1,17" fill="none" stroke="#3c3c3c" stroke-width="1.6"/></svg>
<div style="position:absolute;left:1239px;top:-7.02px;font-family:'Liberation Sans', sans-serif;font-size:22.08px;line-height:22.08px;color:#111;white-space:nowrap;-webkit-text-stroke:0.3px #111;">6</div>
<div style="position:absolute;left:2073px;top:-7.02px;font-family:'Liberation Sans', sans-serif;font-size:22.08px;line-height:22.08px;color:#a80000;white-space:nowrap;transform:scaleX(1.0106);transform-origin:left center;-webkit-text-stroke:0.3px #a80000;">19,030</div>
<div style="position:absolute;left:2402px;top:-9px;width:48px;height:22px;background:#a0a0a0;"></div>
<div style="position:absolute;left:0px;top:57px;width:2499px;height:2px;background:#d8d8d8;"></div>
<div style="position:absolute;left:-915px;width:1000px;text-align:right;top:31.41px;font-family:'Liberation Sans', sans-serif;font-size:22.08px;line-height:22.08px;color:#111;white-space:nowrap;-webkit-text-stroke:0.3px #111;">7</div>
<div style="position:absolute;left:986.5px;top:31.41px;font-family:'Liberation Sans', sans-serif;font-size:22.08px;line-height:22.08px;color:#111;white-space:nowrap;transform:scaleX(1.0593);transform-origin:left center;-webkit-text-stroke:0.3px #111;">DCEndComplete</div>
<svg style="position:absolute;left:1218px;top:30px" width="12" height="18"><polygon points="1,1 10,9.0 1,17" fill="none" stroke="#3c3c3c" stroke-width="1.6"/></svg>
<div style="position:absolute;left:1239px;top:31.41px;font-family:'Liberation Sans', sans-serif;font-size:22.08px;line-height:22.08px;color:#111;white-space:nowrap;-webkit-text-stroke:0.3px #111;">4</div>
<div style="position:absolute;left:2073px;top:31.41px;font-family:'Liberation Sans', sans-serif;font-size:22.08px;line-height:22.08px;color:#a80000;white-space:nowrap;-webkit-text-stroke:0.3px #a80000;">2</div>
<div style="position:absolute;left:2402px;top:29px;width:48px;height:22px;background:#a0a0a0;"></div>
<div style="position:absolute;left:0px;top:96px;width:2499px;height:2px;background:#d8d8d8;"></div>
<div style="position:absolute;left:-915px;width:1000px;text-align:right;top:69.84px;font-family:'Liberation Sans', sans-serif;font-size:22.08px;line-height:22.08px;color:#111;white-space:nowrap;-webkit-text-stroke:0.3px #111;">8</div>
<div style="position:absolute;left:986.5px;top:69.84px;font-family:'Liberation Sans', sans-serif;font-size:22.08px;line-height:22.08px;color:#111;white-space:nowrap;transform:scaleX(1.0533);transform-origin:left center;-webkit-text-stroke:0.3px #111;">DCEndInit</div>
<svg style="position:absolute;left:1215px;top:71px" width="18" height="10"><polygon points="0,0 18,0 9.0,10" fill="#3c3c3c"/></svg>
<div style="position:absolute;left:1239px;top:69.84px;font-family:'Liberation Sans', sans-serif;font-size:22.08px;line-height:22.08px;color:#111;white-space:nowrap;-webkit-text-stroke:0.3px #111;">3</div>
<div style="position:absolute;left:2073px;top:69.84px;font-family:'Liberation Sans', sans-serif;font-size:22.08px;line-height:22.08px;color:#a80000;white-space:nowrap;-webkit-text-stroke:0.3px #a80000;">2</div>
<div style="position:absolute;left:2402px;top:67px;width:48px;height:22px;background:#a0a0a0;"></div>
<div style="position:absolute;left:-915px;width:1000px;text-align:right;top:108.27px;font-family:'Liberation Sans', sans-serif;font-size:22.08px;line-height:22.08px;color:#111;white-space:nowrap;-webkit-text-stroke:0.3px #111;">9</div>
<div style="position:absolute;left:1377.5px;top:107.78px;font-family:'Liberation Sans', sans-serif;font-size:22.66px;line-height:22.66px;color:#111;white-space:nowrap;transform:scaleX(1.0708);transform-origin:left center;-webkit-text-stroke:0.3px #111;">Microsoft-JScript/MethodRundow...</div>
<div style="position:absolute;left:1765px;top:108.27px;font-family:'Liberation Sans', sans-serif;font-size:22.08px;line-height:22.08px;color:#111;white-space:nowrap;-webkit-text-stroke:0.3px #111;">4</div>
<div style="position:absolute;left:1825px;top:108.27px;font-family:'Liberation Sans', sans-serif;font-size:22.08px;line-height:22.08px;color:#111;white-space:nowrap;transform:scaleX(1.0180);transform-origin:left center;-webkit-text-stroke:0.3px #111;">23,444</div>
<div style="position:absolute;left:2241.5px;top:107.78px;font-family:'Liberation Sans', sans-serif;font-size:22.66px;line-height:22.66px;color:#111;white-space:nowrap;transform:scaleX(1.0005);transform-origin:left center;-webkit-text-stroke:0.3px #111;">20.182800600</div>
<div style="position:absolute;left:2073px;top:108.27px;font-family:'Liberation Sans', sans-serif;font-size:22.08px;line-height:22.08px;color:#111;white-space:nowrap;-webkit-text-stroke:0.3px #111;">1</div>
<div style="position:absolute;left:0px;top:135px;width:2499px;height:39px;background:#0078d7;"></div>
<div style="position:absolute;left:-915px;width:1000px;text-align:right;top:146.70px;font-family:'Liberation Sans', sans-serif;font-size:22.08px;line-height:22.08px;color:#fff;white-space:nowrap;-webkit-text-stroke:0.3px #fff;">10</div>
<div style="position:absolute;left:1377.5px;top:146.21px;font-family:'Liberation Sans', sans-serif;font-size:22.66px;line-height:22.66px;color:#fff;white-space:nowrap;transform:scaleX(1.0708);transform-origin:left center;-webkit-text-stroke:0.3px #fff;">Microsoft-JScript/MethodRundow...</div>
<div style="position:absolute;left:1765px;top:146.70px;font-family:'Liberation Sans', sans-serif;font-size:22.08px;line-height:22.08px;color:#fff;white-space:nowrap;-webkit-text-stroke:0.3px #fff;">3</div>
<div style="position:absolute;left:1825px;top:146.70px;font-family:'Liberation Sans', sans-serif;font-size:22.08px;line-height:22.08px;color:#fff;white-space:nowrap;transform:scaleX(1.0135);transform-origin:left center;-webkit-text-stroke:0.3px #fff;">9,128</div>
<div style="position:absolute;left:2241.5px;top:146.21px;font-family:'Liberation Sans', sans-serif;font-size:22.66px;line-height:22.66px;color:#fff;white-space:nowrap;transform:scaleX(1.0005);transform-origin:left center;-webkit-text-stroke:0.3px #fff;">21.970434400</div>
<div style="position:absolute;left:2073px;top:146.70px;font-family:'Liberation Sans', sans-serif;font-size:22.08px;line-height:22.08px;color:#fff;white-space:nowrap;-webkit-text-stroke:0.3px #fff;">1</div>
<div style="position:absolute;left:0px;top:134px;width:2499px;height:2px;background:repeating-linear-gradient(90deg,#000 0 6px,transparent 6px 9px);"></div>
<div style="position:absolute;left:0px;top:173px;width:2499px;height:2px;background:repeating-linear-gradient(90deg,#000 0 6px,transparent 6px 9px);"></div>
<div style="position:absolute;left:0px;top:211px;width:2499px;height:2px;background:#d8d8d8;"></div>
<div style="position:absolute;left:-915px;width:1000px;text-align:right;top:185.13px;font-family:'Liberation Sans', sans-serif;font-size:22.08px;line-height:22.08px;color:#111;white-space:nowrap;-webkit-text-stroke:0.3px #111;">11</div>
<div style="position:absolute;left:826.5px;top:185.13px;font-family:'Liberation Sans', sans-serif;font-size:22.08px;line-height:22.08px;color:#111;white-space:nowrap;transform:scaleX(1.0648);transform-origin:left center;-webkit-text-stroke:0.3px #111;">MethodR...</div>
<div style="position:absolute;left:986.5px;top:185.13px;font-family:'Liberation Sans', sans-serif;font-size:22.08px;line-height:22.08px;color:#111;white-space:nowrap;transform:scaleX(1.0996);transform-origin:left center;-webkit-text-stroke:0.3px #111;">MethodLoad</div>
<svg style="position:absolute;left:1218px;top:184px" width="12" height="18"><polygon points="1,1 10,9.0 1,17" fill="none" stroke="#3c3c3c" stroke-width="1.6"/></svg>
<div style="position:absolute;left:1239px;top:185.13px;font-family:'Liberation Sans', sans-serif;font-size:22.08px;line-height:22.08px;color:#111;white-space:nowrap;-webkit-text-stroke:0.3px #111;">9</div>
<div style="position:absolute;left:2073px;top:185.13px;font-family:'Liberation Sans', sans-serif;font-size:22.08px;line-height:22.08px;color:#a80000;white-space:nowrap;transform:scaleX(1.0106);transform-origin:left center;-webkit-text-stroke:0.3px #a80000;">13,860</div>
<div style="position:absolute;left:2402px;top:183px;width:48px;height:22px;background:#a0a0a0;"></div>
<div style="position:absolute;left:0px;top:250px;width:2499px;height:2px;background:#d8d8d8;"></div>
<div style="position:absolute;left:-915px;width:1000px;text-align:right;top:223.56px;font-family:'Liberation Sans', sans-serif;font-size:22.08px;line-height:22.08px;color:#111;white-space:nowrap;-webkit-text-stroke:0.3px #111;">12</div>
<div style="position:absolute;left:826.5px;top:223.56px;font-family:'Liberation Sans', sans-serif;font-size:22.08px;line-height:22.08px;color:#111;white-space:nowrap;transform:scaleX(1.0187);transform-origin:left center;-webkit-text-stroke:0.3px #111;">ScriptCo...</div>
<svg style="position:absolute;left:801px;top:225px" width="18" height="10"><polygon points="0,0 18,0 9.0,10" fill="#3c3c3c"/></svg>
<div style="position:absolute;left:2073px;top:223.56px;font-family:'Liberation Sans', sans-serif;font-size:22.08px;line-height:22.08px;color:#a80000;white-space:nowrap;-webkit-text-stroke:0.3px #a80000;">74</div>
<div style="position:absolute;left:2402px;top:221px;width:48px;height:22px;background:#a0a0a0;"></div>
<div style="position:absolute;left:0px;top:288px;width:2499px;height:2px;background:#d8d8d8;"></div>
<div style="position:absolute;left:-915px;width:1000px;text-align:right;top:261.99px;font-family:'Liberation Sans', sans-serif;font-size:22.08px;line-height:22.08px;color:#111;white-space:nowrap;-webkit-text-stroke:0.3px #111;">13</div>
<div style="position:absolute;left:986.5px;top:261.99px;font-family:'Liberation Sans', sans-serif;font-size:22.08px;line-height:22.08px;color:#111;white-space:nowrap;transform:scaleX(1.0185);transform-origin:left center;-webkit-text-stroke:0.3px #111;">SourceDCEnd</div>
<svg style="position:absolute;left:1218px;top:261px" width="12" height="18"><polygon points="1,1 10,9.0 1,17" fill="none" stroke="#3c3c3c" stroke-width="1.6"/></svg>
<div style="position:absolute;left:1239px;top:261.99px;font-family:'Liberation Sans', sans-serif;font-size:22.08px;line-height:22.08px;color:#111;white-space:nowrap;-webkit-text-stroke:0.3px #111;">40</div>
<div style="position:absolute;left:2073px;top:261.99px;font-family:'Liberation Sans', sans-serif;font-size:22.08px;line-height:22.08px;color:#a80000;white-space:nowrap;-webkit-text-stroke:0.3px #a80000;">66</div>
<div style="position:absolute;left:2402px;top:260px;width:48px;height:22px;background:#a0a0a0;"></div>
<div style="position:absolute;left:-915px;width:1000px;text-align:right;top:300.42px;font-family:'Liberation Sans', sans-serif;font-size:22.08px;line-height:22.08px;color:#111;white-space:nowrap;-webkit-text-stroke:0.3px #111;">14</div>
<div style="position:absolute;left:986.5px;top:300.42px;font-family:'Liberation Sans', sans-serif;font-size:22.08px;line-height:22.08px;color:#111;white-space:nowrap;transform:scaleX(1.0313);transform-origin:left center;-webkit-text-stroke:0.3px #111;">ScriptContextDCE...</div>
<svg style="position:absolute;left:1218px;top:299px" width="12" height="18"><polygon points="1,1 10,9.0 1,17" fill="none" stroke="#3c3c3c" stroke-width="1.6"/></svg>
<div style="position:absolute;left:1239px;top:300.42px;font-family:'Liberation Sans', sans-serif;font-size:22.08px;line-height:22.08px;color:#111;white-space:nowrap;-webkit-text-stroke:0.3px #111;">8</div>
<div style="position:absolute;left:2073px;top:300.42px;font-family:'Liberation Sans', sans-serif;font-size:22.08px;line-height:22.08px;color:#a80000;white-space:nowrap;-webkit-text-stroke:0.3px #a80000;">8</div>
<div style="position:absolute;left:2402px;top:298px;width:48px;height:22px;background:#a0a0a0;"></div>
<div style="position:absolute;left:90px;top:0px;width:2px;height:327px;background:#d6d6d6;"></div>
<div style="position:absolute;left:490px;top:0px;width:2px;height:327px;background:#d6d6d6;"></div>
<div style="position:absolute;left:790px;top:0px;width:2px;height:327px;background:#d6d6d6;"></div>
<div style="position:absolute;left:950px;top:0px;width:2px;height:327px;background:#d6d6d6;"></div>
<div style="position:absolute;left:1203px;top:0px;width:2px;height:327px;background:#d6d6d6;"></div>
<div style="position:absolute;left:1761px;top:0px;width:2px;height:327px;background:#d6d6d6;"></div>
<div style="position:absolute;left:1821px;top:0px;width:2px;height:327px;background:#d6d6d6;"></div>
<div style="position:absolute;left:1920.5px;top:0px;width:2px;height:327px;background:#d6d6d6;"></div>
<div style="position:absolute;left:2068.5px;top:0px;width:2px;height:327px;background:#d6d6d6;"></div>
<div style="position:absolute;left:2398px;top:0px;width:2px;height:327px;background:#d6d6d6;"></div>
<div style="position:absolute;left:90px;top:136px;width:2px;height:37px;background:rgba(0,120,215,0.55);"></div>
<div style="position:absolute;left:490px;top:136px;width:2px;height:37px;background:rgba(0,120,215,0.55);"></div>
<div style="position:absolute;left:790px;top:136px;width:2px;height:37px;background:rgba(0,120,215,0.55);"></div>
<div style="position:absolute;left:950px;top:136px;width:2px;height:37px;background:rgba(0,120,215,0.55);"></div>
<div style="position:absolute;left:1203px;top:136px;width:2px;height:37px;background:rgba(0,120,215,0.55);"></div>
<div style="position:absolute;left:1761px;top:136px;width:2px;height:37px;background:rgba(0,120,215,0.55);"></div>
<div style="position:absolute;left:1821px;top:136px;width:2px;height:37px;background:rgba(0,120,215,0.55);"></div>
<div style="position:absolute;left:1920.5px;top:136px;width:2px;height:37px;background:rgba(0,120,215,0.55);"></div>
<div style="position:absolute;left:2068.5px;top:136px;width:2px;height:37px;background:rgba(0,120,215,0.55);"></div>
<div style="position:absolute;left:2398px;top:136px;width:2px;height:37px;background:rgba(0,120,215,0.55);"></div>
<div style="position:absolute;left:1363px;top:0px;width:10px;height:327px;background:#ffd400;"></div>
<div style="position:absolute;left:2228px;top:0px;width:10px;height:327px;background:#a8d4e6;"></div>
</div>
<div style="position:absolute;left:1864px;top:596px;width:10px;height:40px;background:#ffd400;"></div>
<div style="position:absolute;left:2729px;top:596px;width:10px;height:40px;background:#a8d4e6;"></div>
<div style="position:absolute;left:3000px;top:596px;width:33px;height:40px;background:#ffffff;"></div>
<div style="position:absolute;left:3000px;top:636px;width:33px;height:327px;background:#f0f0f0;"></div>
<div style="position:absolute;left:3000px;top:721px;width:33px;height:80px;background:#cdcdcd;"></div>
<svg style="position:absolute;left:3007px;top:650px" width="18" height="12"><polyline points="2,10 9,3 16,10" fill="none" stroke="#8a8a8a" stroke-width="2"/></svg>
<svg style="position:absolute;left:3007px;top:940px" width="18" height="12"><polyline points="2,2 9,9 16,2" fill="none" stroke="#8a8a8a" stroke-width="2"/></svg>
<div style="position:absolute;left:501px;top:963px;width:2532px;height:33px;background:#f0f0f0;"></div>
<div style="position:absolute;left:1874px;top:962px;width:662px;height:2px;background:#c8c8c8;"></div>
<div style="position:absolute;left:1908px;top:963px;width:148px;height:33px;background:#cdcdcd;"></div>
<svg style="position:absolute;left:1884px;top:971px" width="14" height="18"><polyline points="11,2 4,9 11,16" fill="none" stroke="#8a8a8a" stroke-width="2"/></svg>
<svg style="position:absolute;left:2546px;top:971px" width="14" height="18"><polyline points="3,2 10,9 3,16" fill="none" stroke="#8a8a8a" stroke-width="2"/></svg>
<div style="position:absolute;left:495px;top:1227px;width:2544px;height:95px;background:#ffffff;"></div>
<div style="position:absolute;left:-111px;width:1000px;text-align:right;top:1233.91px;font-family:'Liberation Sans', sans-serif;font-size:22.08px;line-height:22.08px;color:#111;white-space:nowrap;-webkit-text-stroke:0.3px #111;"><span style="display:inline-block;transform:scaleX(0.9050);transform-origin:right center;">Start:</span></div>
<div style="position:absolute;left:-111px;width:1000px;text-align:right;top:1264.91px;font-family:'Liberation Sans', sans-serif;font-size:22.08px;line-height:22.08px;color:#111;white-space:nowrap;-webkit-text-stroke:0.3px #111;"><span style="display:inline-block;transform:scaleX(0.8696);transform-origin:right center;">End:</span></div>
<div style="position:absolute;left:-111px;width:1000px;text-align:right;top:1295.91px;font-family:'Liberation Sans', sans-serif;font-size:22.08px;line-height:22.08px;color:#111;white-space:nowrap;-webkit-text-stroke:0.3px #111;"><span style="display:inline-block;transform:scaleX(0.9822);transform-origin:right center;">Duration:</span></div>
<div style="position:absolute;left:54px;width:1000px;text-align:right;top:1233.74px;font-family:'Liberation Mono', monospace;font-size:19.8px;line-height:19.8px;color:#111;white-space:nowrap;-webkit-text-stroke:0.45px #111;"><span style="display:inline-block;transform:scaleX(1.0100);transform-origin:right center;">0.004502800s</span></div>
<div style="position:absolute;left:54px;width:1000px;text-align:right;top:1264.74px;font-family:'Liberation Mono', monospace;font-size:19.8px;line-height:19.8px;color:#111;white-space:nowrap;-webkit-text-stroke:0.45px #111;"><span style="display:inline-block;transform:scaleX(1.0051);transform-origin:right center;">36.463526000s</span></div>
<div style="position:absolute;left:54px;width:1000px;text-align:right;top:1295.74px;font-family:'Liberation Mono', monospace;font-size:19.8px;line-height:19.8px;color:#111;white-space:nowrap;-webkit-text-stroke:0.45px #111;"><span style="display:inline-block;transform:scaleX(1.0051);transform-origin:right center;">36.459023200s</span></div>
<div style="position:absolute;left:1071px;top:1229.2px;width:1929px;height:1.7px;background:#000;"></div>
<svg style="position:absolute;left:1071px;top:1229.5px" width="1931" height="30"><rect x="22.44" y="1.4" width="2" height="10.5" fill="#a0a0a0"/><rect x="48.89" y="1.4" width="2" height="10.5" fill="#a0a0a0"/><rect x="75.34" y="1.4" width="2" height="10.5" fill="#a0a0a0"/><rect x="101.68" y="1.4" width="2.2" height="22.5" fill="#000"/><rect x="128.22" y="1.4" width="2" height="10.5" fill="#a0a0a0"/><rect x="154.67" y="1.4" width="2" height="10.5" fill="#a0a0a0"/><rect x="181.12" y="1.4" width="2" height="10.5" fill="#a0a0a0"/><rect x="207.46" y="1.4" width="2.2" height="22.5" fill="#000"/><rect x="234.01" y="1.4" width="2" height="10.5" fill="#a0a0a0"/><rect x="260.45" y="1.4" width="2" height="10.5" fill="#a0a0a0"/><rect x="286.89" y="1.4" width="2" height="10.5" fill="#a0a0a0"/><rect x="313.24" y="1.4" width="2.2" height="22.5" fill="#000"/><rect x="339.79" y="1.4" width="2" height="10.5" fill="#a0a0a0"/><rect x="366.23" y="1.4" width="2" height="10.5" fill="#a0a0a0"/><rect x="392.67" y="1.4" width="2" height="10.5" fill="#a0a0a0"/><rect x="419.02" y="1.4" width="2.2" height="22.5" fill="#000"/><rect x="445.57" y="1.4" width="2" height="10.5" fill="#a0a0a0"/><rect x="472.01" y="1.4" width="2" height="10.5" fill="#a0a0a0"/><rect x="498.45" y="1.4" width="2" height="10.5" fill="#a0a0a0"/><rect x="524.80" y="1.4" width="2.2" height="22.5" fill="#000"/><rect x="551.35" y="1.4" width="2" height="10.5" fill="#a0a0a0"/><rect x="577.79" y="1.4" width="2" height="10.5" fill="#a0a0a0"/><rect x="604.24" y="1.4" width="2" height="10.5" fill="#a0a0a0"/><rect x="630.58" y="1.4" width="2.2" height="22.5" fill="#000"/><rect x="657.12" y="1.4" width="2" height="10.5" fill="#a0a0a0"/><rect x="683.57" y="1.4" width="2" height="10.5" fill="#a0a0a0"/><rect x="710.01" y="1.4" width="2" height="10.5" fill="#a0a0a0"/><rect x="736.36" y="1.4" width="2.2" height="22.5" fill="#000"/><rect x="762.90" y="1.4" width="2" height="10.5" fill="#a0a0a0"/><rect x="789.35" y="1.4" width="2" height="10.5" fill="#a0a0a0"/><rect x="815.80" y="1.4" width="2" height="10.5" fill="#a0a0a0"/><rect x="842.14" y="1.4" width="2.2" height="22.5" fill="#000"/><rect x="868.68" y="1.4" width="2" height="10.5" fill="#a0a0a0"/><rect x="895.13" y="1.4" width="2" height="10.5" fill="#a0a0a0"/><rect x="921.58" y="1.4" width="2" height="10.5" fill="#a0a0a0"/><rect x="947.92" y="1.4" width="2.2" height="22.5" fill="#000"/><rect x="974.47" y="1.4" width="2" height="10.5" fill="#a0a0a0"/><rect x="1000.91" y="1.4" width="2" height="10.5" fill="#a0a0a0"/><rect x="1027.36" y="1.4" width="2" height="10.5" fill="#a0a0a0"/><rect x="1053.70" y="1.4" width="2.2" height="22.5" fill="#000"/><rect x="1080.24" y="1.4" width="2" height="10.5" fill="#a0a0a0"/><rect x="1106.69" y="1.4" width="2" height="10.5" fill="#a0a0a0"/><rect x="1133.14" y="1.4" width="2" height="10.5" fill="#a0a0a0"/><rect x="1159.48" y="1.4" width="2.2" height="22.5" fill="#000"/><rect x="1186.03" y="1.4" width="2" height="10.5" fill="#a0a0a0"/><rect x="1212.47" y="1.4" width="2" height="10.5" fill="#a0a0a0"/><rect x="1238.91" y="1.4" width="2" height="10.5" fill="#a0a0a0"/><rect x="1265.26" y="1.4" width="2.2" height="22.5" fill="#000"/><rect x="1291.81" y="1.4" width="2" height="10.5" fill="#a0a0a0"/><rect x="1318.25" y="1.4" width="2" height="10.5" fill="#a0a0a0"/><rect x="1344.69" y="1.4" width="2" height="10.5" fill="#a0a0a0"/><rect x="1371.04" y="1.4" width="2.2" height="22.5" fill="#000"/><rect x="1397.59" y="1.4" width="2" height="10.5" fill="#a0a0a0"/><rect x="1424.03" y="1.4" width="2" height="10.5" fill="#a0a0a0"/><rect x="1450.47" y="1.4" width="2" height="10.5" fill="#a0a0a0"/><rect x="1476.82" y="1.4" width="2.2" height="22.5" fill="#000"/><rect x="1503.36" y="1.4" width="2" height="10.5" fill="#a0a0a0"/><rect x="1529.81" y="1.4" width="2" height="10.5" fill="#a0a0a0"/><rect x="1556.26" y="1.4" width="2" height="10.5" fill="#a0a0a0"/><rect x="1582.60" y="1.4" width="2.2" height="22.5" fill="#000"/><rect x="1609.14" y="1.4" width="2" height="10.5" fill="#a0a0a0"/><rect x="1635.59" y="1.4" width="2" height="10.5" fill="#a0a0a0"/><rect x="1662.03" y="1.4" width="2" height="10.5" fill="#a0a0a0"/><rect x="1688.38" y="1.4" width="2.2" height="22.5" fill="#000"/><rect x="1714.93" y="1.4" width="2" height="10.5" fill="#a0a0a0"/><rect x="1741.37" y="1.4" width="2" height="10.5" fill="#a0a0a0"/><rect x="1767.82" y="1.4" width="2" height="10.5" fill="#a0a0a0"/><rect x="1794.16" y="1.4" width="2.2" height="22.5" fill="#000"/><rect x="1820.70" y="1.4" width="2" height="10.5" fill="#a0a0a0"/><rect x="1847.15" y="1.4" width="2" height="10.5" fill="#a0a0a0"/><rect x="1873.60" y="1.4" width="2" height="10.5" fill="#a0a0a0"/><rect x="1899.94" y="1.4" width="2.2" height="22.5" fill="#000"/><rect x="1926.49" y="1.4" width="2" height="10.5" fill="#a0a0a0"/></svg>
<div style="position:absolute;left:1071px;top:1258px;width:12px;height:26px;overflow:hidden"><div style="position:absolute;left:-497.5px;width:1000px;text-align:center;top:4.76px;font-family:'Liberation Sans', sans-serif;font-size:18px;line-height:18px;color:#111;white-space:nowrap;-webkit-text-stroke:0.3px #111;">0</div>
</div>
<div style="position:absolute;left:673.78px;width:1000px;text-align:center;top:1262.76px;font-family:'Liberation Sans', sans-serif;font-size:18px;line-height:18px;color:#111;white-space:nowrap;-webkit-text-stroke:0.3px #111;">2</div>
<div style="position:absolute;left:779.56px;width:1000px;text-align:center;top:1262.76px;font-family:'Liberation Sans', sans-serif;font-size:18px;line-height:18px;color:#111;white-space:nowrap;-webkit-text-stroke:0.3px #111;">4</div>
<div style="position:absolute;left:885.3400000000001px;width:1000px;text-align:center;top:1262.76px;font-family:'Liberation Sans', sans-serif;font-size:18px;line-height:18px;color:#111;white-space:nowrap;-webkit-text-stroke:0.3px #111;">6</div>
<div style="position:absolute;left:991.1199999999999px;width:1000px;text-align:center;top:1262.76px;font-family:'Liberation Sans', sans-serif;font-size:18px;line-height:18px;color:#111;white-space:nowrap;-webkit-text-stroke:0.3px #111;">8</div>
<div style="position:absolute;left:1096.9px;width:1000px;text-align:center;top:1262.76px;font-family:'Liberation Sans', sans-serif;font-size:18px;line-height:18px;color:#111;white-space:nowrap;-webkit-text-stroke:0.3px #111;">10</div>
<div style="position:absolute;left:1202.68px;width:1000px;text-align:center;top:1262.76px;font-family:'Liberation Sans', sans-serif;font-size:18px;line-height:18px;color:#111;white-space:nowrap;-webkit-text-stroke:0.3px #111;">12</div>
<div style="position:absolute;left:1308.46px;width:1000px;text-align:center;top:1262.76px;font-family:'Liberation Sans', sans-serif;font-size:18px;line-height:18px;color:#111;white-space:nowrap;-webkit-text-stroke:0.3px #111;">14</div>
<div style="position:absolute;left:1414.24px;width:1000px;text-align:center;top:1262.76px;font-family:'Liberation Sans', sans-serif;font-size:18px;line-height:18px;color:#111;white-space:nowrap;-webkit-text-stroke:0.3px #111;">16</div>
<div style="position:absolute;left:1520.02px;width:1000px;text-align:center;top:1262.76px;font-family:'Liberation Sans', sans-serif;font-size:18px;line-height:18px;color:#111;white-space:nowrap;-webkit-text-stroke:0.3px #111;">18</div>
<div style="position:absolute;left:1625.8000000000002px;width:1000px;text-align:center;top:1262.76px;font-family:'Liberation Sans', sans-serif;font-size:18px;line-height:18px;color:#111;white-space:nowrap;-webkit-text-stroke:0.3px #111;">20</div>
<div style="position:absolute;left:1837.3600000000001px;width:1000px;text-align:center;top:1262.76px;font-family:'Liberation Sans', sans-serif;font-size:18px;line-height:18px;color:#111;white-space:nowrap;-webkit-text-stroke:0.3px #111;">24</div>
<div style="position:absolute;left:1943.1400000000003px;width:1000px;text-align:center;top:1262.76px;font-family:'Liberation Sans', sans-serif;font-size:18px;line-height:18px;color:#111;white-space:nowrap;-webkit-text-stroke:0.3px #111;">26</div>
<div style="position:absolute;left:2048.92px;width:1000px;text-align:center;top:1262.76px;font-family:'Liberation Sans', sans-serif;font-size:18px;line-height:18px;color:#111;white-space:nowrap;-webkit-text-stroke:0.3px #111;">28</div>
<div style="position:absolute;left:2154.7px;width:1000px;text-align:center;top:1262.76px;font-family:'Liberation Sans', sans-serif;font-size:18px;line-height:18px;color:#111;white-space:nowrap;-webkit-text-stroke:0.3px #111;">30</div>
<div style="position:absolute;left:2260.48px;width:1000px;text-align:center;top:1262.76px;font-family:'Liberation Sans', sans-serif;font-size:18px;line-height:18px;color:#111;white-space:nowrap;-webkit-text-stroke:0.3px #111;">32</div>
<div style="position:absolute;left:2366.26px;width:1000px;text-align:center;top:1262.76px;font-family:'Liberation Sans', sans-serif;font-size:18px;line-height:18px;color:#111;white-space:nowrap;-webkit-text-stroke:0.3px #111;">34</div>
<div style="position:absolute;left:2472.04px;width:1000px;text-align:center;top:1262.76px;font-family:'Liberation Sans', sans-serif;font-size:18px;line-height:18px;color:#111;white-space:nowrap;-webkit-text-stroke:0.3px #111;">36</div>
<div style="position:absolute;left:2231.5px;top:1231px;width:3px;height:10px;background:#000;"></div>
<div style="position:absolute;left:2161px;top:1241px;width:143px;height:37px;background:#ffffff;border:3px solid #111;box-sizing:border-box;"></div>
<div style="position:absolute;left:1733.5px;width:1000px;text-align:center;top:1253.92px;font-family:'Liberation Sans', sans-serif;font-size:19px;line-height:19px;color:#111;white-space:nowrap;-webkit-text-stroke:0.3px #111;"><span style="display:inline-block;transform:scaleX(1.0075);transform-origin:center center;">22.008573366s</span></div>
<div style="position:absolute;left:1071px;top:1283px;width:1929px;height:34px;background:#eeeeee;"></div>
<svg style="position:absolute;left:1085px;top:1291px" width="14" height="18"><polyline points="11,2 4,9 11,16" fill="none" stroke="#d0d0d0" stroke-width="2"/></svg>
<svg style="position:absolute;left:2974px;top:1291px" width="14" height="18"><polyline points="3,2 10,9 3,16" fill="none" stroke="#d0d0d0" stroke-width="2"/></svg>
</body></html>
